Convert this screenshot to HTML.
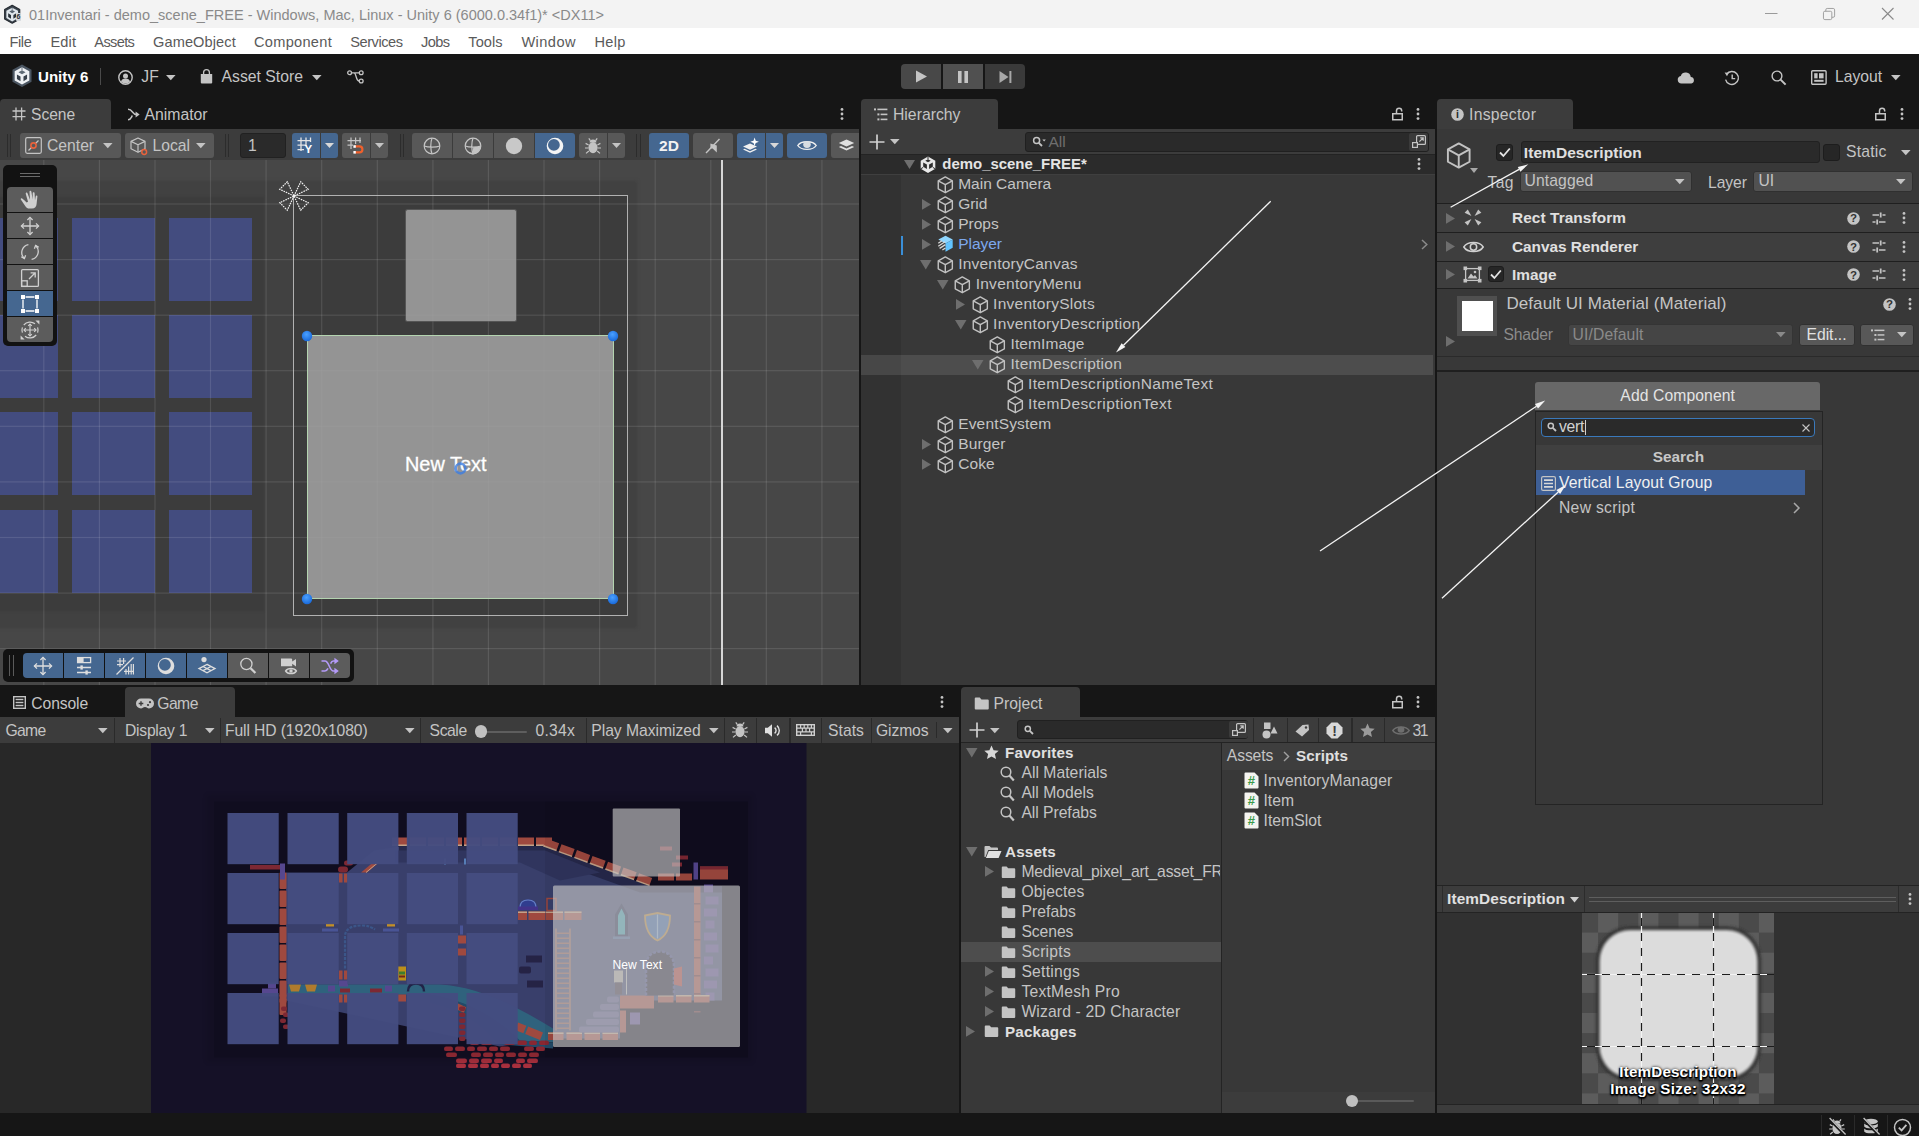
<!DOCTYPE html>
<html><head><meta charset="utf-8"><title>Unity</title>
<style>
html,body{margin:0;padding:0;}
body{width:1919px;height:1136px;overflow:hidden;background:#161616;font-family:"Liberation Sans", sans-serif;position:relative;}
.r{position:absolute;box-sizing:border-box;}
.t{position:absolute;white-space:nowrap;}
svg{position:absolute;overflow:visible;}
.btn{position:absolute;box-sizing:border-box;background:#585858;}
</style></head><body>
<div class="r" style="left:0px;top:0px;width:1919px;height:28px;background:#f3f3f3;"></div>
<div class="r" style="left:0px;top:28px;width:1919px;height:26px;background:#ffffff;"></div>
<svg style="left:3.8px;top:4.8px;" width="16.4" height="18.6" viewBox="0 0 20 23.6"><path d="M10 0.4L19.6 5.8V17.8L10 23.2L0.4 17.8V5.8Z" fill="#3a434c" stroke="#252b31" stroke-width="1.4" stroke-linejoin="round"/><path d="M10 3.4L17.4 7.4V16.6L10 20.8L2.6 16.6V7.4Z" fill="#dfe6ec"/><path d="M10 6.2L13.6 8.3L10 10.4L6.4 8.3Z" fill="#56626e"/><path d="M4.9 10.6L8.5 12.7V17.3L4.9 15.2Z" fill="#2a323a"/><path d="M15.1 10.6L11.5 12.7V17.3L15.1 15.2Z" fill="#2a323a"/><path d="M10 3.4V6.2" stroke="#56626e" stroke-width="0.9"/></svg>
<div class="r" style="left:16.3px;top:13.3px;width:4.4px;height:7.4px;background:#d4d8dc;border-radius:1px;"></div>
<div class="t" style="left:16.3px;top:13.00px;height:8px;line-height:8px;font-size:7px;color:#30363c;font-weight:bold;width:4.4px;text-align:center;">6</div>
<div class="t" style="left:29px;top:0.50px;height:28px;line-height:28px;font-size:14.5px;color:#8a8a8a;letter-spacing:0.007px;">01Inventari - demo_scene_FREE - Windows, Mac, Linux - Unity 6 (6000.0.34f1)* &lt;DX11&gt;</div>
<svg style="left:1763px;top:7.8px;" width="20" height="12" viewBox="0 0 20 12"><path d="M2 5.5H14.500" stroke="#9a9a9a" stroke-width="1"/></svg>
<svg style="left:1822.5px;top:7.8px;" width="13" height="13" viewBox="0 0 14 14"><g fill="none" stroke="#9a9a9a" stroke-width="1"><rect x="0.5" y="3.5" width="9" height="9" rx="1.5"/><path d="M3 3.5V2a1.5 1.5 0 0 1 1.5 -1.5H11a1.5 1.5 0 0 1 1.5 1.5V8.5a1.5 1.5 0 0 1 -1.5 1.5H9.5"/></g></svg>
<svg style="left:1881.2px;top:7.3px;" width="14" height="14" viewBox="0 0 14 14"><path d="M1 1L12.5 12.5M12.5 1L1 12.5" stroke="#8a8a8a" stroke-width="1.1" fill="none"/></svg>
<div class="t" style="left:9.5px;top:28.50px;height:26px;line-height:26px;font-size:14.6px;color:#5a5a5a;letter-spacing:-0.408px;">File</div>
<div class="t" style="left:50.5px;top:28.50px;height:26px;line-height:26px;font-size:14.6px;color:#5a5a5a;letter-spacing:0.126px;">Edit</div>
<div class="t" style="left:94.3px;top:28.50px;height:26px;line-height:26px;font-size:14.6px;color:#5a5a5a;letter-spacing:-0.639px;">Assets</div>
<div class="t" style="left:153px;top:28.50px;height:26px;line-height:26px;font-size:14.6px;color:#5a5a5a;letter-spacing:0.089px;">GameObject</div>
<div class="t" style="left:254px;top:28.50px;height:26px;line-height:26px;font-size:14.6px;color:#5a5a5a;letter-spacing:0.284px;">Component</div>
<div class="t" style="left:350.3px;top:28.50px;height:26px;line-height:26px;font-size:14.6px;color:#5a5a5a;letter-spacing:-0.465px;">Services</div>
<div class="t" style="left:421px;top:28.50px;height:26px;line-height:26px;font-size:14.6px;color:#5a5a5a;letter-spacing:-0.611px;">Jobs</div>
<div class="t" style="left:468.3px;top:28.50px;height:26px;line-height:26px;font-size:14.6px;color:#5a5a5a;letter-spacing:0.048px;">Tools</div>
<div class="t" style="left:521.4px;top:28.50px;height:26px;line-height:26px;font-size:14.6px;color:#5a5a5a;letter-spacing:0.449px;">Window</div>
<div class="t" style="left:594.5px;top:28.50px;height:26px;line-height:26px;font-size:14.6px;color:#5a5a5a;letter-spacing:0.278px;">Help</div>
<div class="r" style="left:0px;top:54px;width:1919px;height:45px;background:#161616;"></div>
<svg style="left:12px;top:64.4px;" width="20" height="23.4" viewBox="0 0 20 23.6"><path d="M10 0.4L19.6 5.8V17.8L10 23.2L0.4 17.8V5.8Z" fill="#4b5662"/><path d="M10 3.4L17.4 7.4V16.6L10 20.8L2.6 16.6V7.4Z" fill="#eef1f4"/><path d="M10 6.2L13.6 8.3L10 10.4L6.4 8.3Z" fill="#5f6b76"/><path d="M4.9 10.6L8.5 12.7V17.3L4.9 15.2Z" fill="#38414b"/><path d="M15.1 10.6L11.5 12.7V17.3L15.1 15.2Z" fill="#38414b"/><path d="M10 3.4V6.2" stroke="#5f6b76" stroke-width="0.9"/></svg>
<div class="t" style="left:38px;top:65.00px;height:24px;line-height:24px;font-size:15.1px;color:#ffffff;font-weight:bold;">Unity 6</div>
<div class="r" style="left:99.5px;top:68px;width:1px;height:17px;background:#4a4a4a;"></div>
<svg style="left:118.4px;top:69.5px;" width="15" height="15" viewBox="0 0 15 15"><circle cx="7.5" cy="7.5" r="6.7" fill="none" stroke="#c4c4c4" stroke-width="1.4"/><circle cx="7.5" cy="6" r="2.5" fill="#c4c4c4"/><path d="M3 11.8a4.6 4.2 0 0 1 9 0a6.5 6.5 0 0 1 -9 0Z" fill="#c4c4c4"/></svg>
<div class="t" style="left:141.3px;top:65.00px;height:24px;line-height:24px;font-size:15.7px;color:#c4c4c4;">JF</div>
<svg style="left:165.6px;top:74.5px;" width="9.6" height="5.2" viewBox="0 0 9.6 5.2"><path d="M0 0H9.6L4.8 5.2Z" fill="#c4c4c4"/></svg>
<svg style="left:199.8px;top:69px;" width="13" height="15" viewBox="0 0 13 15"><path d="M0.8 5h11.4v8.4a1 1 0 0 1 -1 1H1.8a1 1 0 0 1 -1 -1Z" fill="#c4c4c4"/><path d="M3.6 6V3.6a2.9 2.9 0 0 1 5.8 0V6" fill="none" stroke="#c4c4c4" stroke-width="1.3"/></svg>
<div class="t" style="left:221.6px;top:65.00px;height:24px;line-height:24px;font-size:15.75px;color:#c4c4c4;">Asset Store</div>
<svg style="left:311.9px;top:74.5px;" width="9.6" height="5.2" viewBox="0 0 9.6 5.2"><path d="M0 0H9.6L4.8 5.2Z" fill="#c4c4c4"/></svg>
<svg style="left:346.5px;top:69.5px;" width="17" height="14" viewBox="0 0 17 14"><g fill="none" stroke="#c4c4c4" stroke-width="1.3"><circle cx="2.6" cy="2.8" r="1.9"/><circle cx="14.2" cy="2.8" r="1.9"/><circle cx="14.2" cy="11" r="1.9"/><path d="M4.5 2.8H12.3M7 2.8C9.5 2.8 8.5 11 12.3 11"/></g></svg>
<div class="r" style="left:901px;top:64px;width:40px;height:25px;background:#484848;border-radius:4px 0 0 4px;"></div>
<div class="r" style="left:943px;top:64px;width:40px;height:25px;background:#505050;"></div>
<div class="r" style="left:985px;top:64px;width:40px;height:25px;background:#3a3a3a;border-radius:0 4px 4px 0;"></div>
<svg style="left:915px;top:70px;" width="13" height="13" viewBox="0 0 13 13"><path d="M1 0.5L12 6.5L1 12.5Z" fill="#c4c4c4"/></svg>
<svg style="left:957px;top:70.5px;" width="12" height="12" viewBox="0 0 12 12"><rect x="1" y="0" width="3.6" height="12" fill="#c4c4c4"/><rect x="7.4" y="0" width="3.6" height="12" fill="#c4c4c4"/></svg>
<svg style="left:998.5px;top:70.5px;" width="13" height="12" viewBox="0 0 13 12"><path d="M0.5 0L9.5 6L0.5 12Z" fill="#a8a8a8"/><rect x="10.4" y="0" width="2" height="12" fill="#a8a8a8"/></svg>
<svg style="left:1677px;top:70.5px;" width="19" height="13" viewBox="0 0 19 13"><path d="M4.4 12.6a3.9 3.9 0 0 1 -0.6 -7.7a5.2 5.2 0 0 1 10 1.2a3.3 3.3 0 0 1 0.6 6.5Z" fill="#c4c4c4"/></svg>
<svg style="left:1724px;top:69.5px;" width="16" height="16" viewBox="0 0 16 16"><g fill="none" stroke="#c4c4c4" stroke-width="1.4"><path d="M2.6 4.2A6.5 6.5 0 1 1 1.6 9.6"/><path d="M8.2 4.6V8.6H11.2"/></g><path d="M0.6 2.4L4.8 2.8L3 6.2Z" fill="#c4c4c4"/></svg>
<svg style="left:1770.5px;top:69.5px;" width="16" height="16" viewBox="0 0 16 16"><circle cx="6" cy="6" r="4.9" fill="none" stroke="#c4c4c4" stroke-width="1.4"/><path d="M9.6 9.6L14.6 14.6" stroke="#c4c4c4" stroke-width="2"/></svg>
<svg style="left:1811px;top:69.5px;" width="16" height="15" viewBox="0 0 16 15"><rect x="0.7" y="0.7" width="14.4" height="13.6" rx="1" fill="none" stroke="#c4c4c4" stroke-width="1.4"/><rect x="3.2" y="3.2" width="3.4" height="5.2" fill="#c4c4c4"/><rect x="8" y="3.2" width="4.6" height="5.2" fill="#c4c4c4"/><rect x="3.2" y="9.8" width="9.4" height="2" fill="#c4c4c4"/></svg>
<div class="t" style="left:1835px;top:65.00px;height:24px;line-height:24px;font-size:15.7px;color:#c4c4c4;">Layout</div>
<svg style="left:1891px;top:74.5px;" width="9.6" height="5.2" viewBox="0 0 9.6 5.2"><path d="M0 0H9.6L4.8 5.2Z" fill="#c4c4c4"/></svg>
<div class="r" style="left:0px;top:99px;width:111px;height:31px;background:#3c3c3c;border-radius:4px 4px 0 0;"></div>
<svg style="left:12px;top:107px;" width="14" height="14" viewBox="0 0 14 14"><path d="M4 0.5V13.5M9.6 0.5V13.5M0.5 4H13.5M0.5 9.6H13.5" stroke="#c4c4c4" stroke-width="1.3" fill="none"/></svg>
<div class="t" style="left:31px;top:103.40px;height:24px;line-height:24px;font-size:15.6px;color:#c4c4c4;">Scene</div>
<svg style="left:126.5px;top:107.5px;" width="13" height="13" viewBox="0 0 13 13"><path d="M1 1.2C6 1.2 5 6.5 9.5 6.5M1 11.8C4 11.8 4.2 9 5.4 7.6" stroke="#c4c4c4" stroke-width="1.5" fill="none"/><path d="M8.6 3.6L12.6 6.5L8.6 9.4Z" fill="#c4c4c4"/></svg>
<div class="t" style="left:144.4px;top:103.40px;height:24px;line-height:24px;font-size:15.8px;color:#c4c4c4;">Animator</div>
<svg style="left:839px;top:106px;" width="6" height="16" viewBox="0 0 6 16"><circle cx="3" cy="3.4000000000000004" r="1.4" fill="#c4c4c4"/><circle cx="3" cy="8.0" r="1.4" fill="#c4c4c4"/><circle cx="3" cy="12.6" r="1.4" fill="#c4c4c4"/></svg>
<div class="r" style="left:0px;top:129px;width:859px;height:31px;background:#3c3c3c;"></div>
<div class="r" style="left:7px;top:134px;width:1px;height:23px;background:#2c2c2c;"></div>
<div class="r" style="left:10px;top:134px;width:1px;height:23px;background:#2c2c2c;"></div>
<div class="r" style="left:20px;top:133px;width:101px;height:25px;background:#585858;border-radius:3px;"></div>
<div class="r" style="left:125px;top:133px;width:89px;height:25px;background:#585858;border-radius:3px;"></div>
<svg style="left:25px;top:137px;" width="17" height="17" viewBox="0 0 17 17"><rect x="0.7" y="0.7" width="15.6" height="15.6" rx="1.5" fill="none" stroke="#c4c4c4" stroke-width="1.2"/><path d="M3.5 13.5L13.5 3.5" stroke="#c4c4c4" stroke-width="1.2"/><circle cx="8.5" cy="8.5" r="2.6" fill="#585858" stroke="#e8623c" stroke-width="1.6"/></svg>
<div class="t" style="left:47px;top:133.50px;height:24px;line-height:24px;font-size:15.7px;color:#c4c4c4;">Center</div>
<svg style="left:103px;top:143px;" width="9.6" height="5.2" viewBox="0 0 9.6 5.2"><path d="M0 0H9.6L4.8 5.2Z" fill="#c4c4c4"/></svg>
<svg style="left:130px;top:137px;" width="20" height="20" viewBox="0 0 20 20"><g fill="none" stroke="#c4c4c4" stroke-width="1.2" stroke-linejoin="round"><path d="M8 1L15 4.4V11.8L8 15.2L1 11.8V4.4Z"/><path d="M1 4.4L8 7.8L15 4.4M8 7.8V15.2"/></g><circle cx="14.2" cy="15" r="2.4" fill="#585858" stroke="#e8623c" stroke-width="1.5"/></svg>
<div class="t" style="left:152.5px;top:133.50px;height:24px;line-height:24px;font-size:15.7px;color:#c4c4c4;">Local</div>
<svg style="left:196px;top:143px;" width="9.6" height="5.2" viewBox="0 0 9.6 5.2"><path d="M0 0H9.6L4.8 5.2Z" fill="#c4c4c4"/></svg>
<div class="r" style="left:225px;top:134px;width:1px;height:23px;background:#2c2c2c;"></div>
<div class="r" style="left:228px;top:134px;width:1px;height:23px;background:#2c2c2c;"></div>
<div class="r" style="left:240px;top:133px;width:46px;height:25px;background:#2a2a2a;border-radius:3px;border:1px solid #212121;"></div>
<div class="t" style="left:248px;top:133.50px;height:24px;line-height:24px;font-size:15.7px;color:#c4c4c4;">1</div>
<div class="r" style="left:292px;top:133px;width:28px;height:25px;background:#456790;border-radius:3px 0 0 3px;"></div>
<div class="r" style="left:321px;top:133px;width:17px;height:25px;background:#456790;border-radius:0 3px 3px 0;"></div>
<svg style="left:297px;top:137px;" width="18" height="17" viewBox="0 0 18 17"><path d="M4 0.5V14M9 0.5V9M0.5 3.6H14M0.5 8.2H9M0.5 12.6H7" stroke="#e4e4e4" stroke-width="1.3" fill="none"/><path d="M13.5 0.5V5" stroke="#e4e4e4" stroke-width="1.3"/><text x="7.600" y="16.200" font-size="11.500" font-weight="bold" fill="#ffffff" font-family="Liberation Sans, sans-serif">Y</text></svg>
<svg style="left:325px;top:143px;" width="9" height="5" viewBox="0 0 9 5"><path d="M0 0H9L4.5 5Z" fill="#d8d8d8"/></svg>
<div class="r" style="left:342px;top:133px;width:28px;height:25px;background:#585858;border-radius:3px 0 0 3px;"></div>
<div class="r" style="left:371px;top:133px;width:17px;height:25px;background:#585858;border-radius:0 3px 3px 0;"></div>
<svg style="left:347px;top:137px;" width="18" height="17" viewBox="0 0 18 17"><path d="M4 0.5V12M8.6 0.5V7M13 0.5V6M0.5 3.6H14M0.5 8.2H6" stroke="#c4c4c4" stroke-width="1.2" fill="none"/><path d="M8 9.4H12.4a3 3 0 0 1 0 6H8" stroke="#f0602c" stroke-width="2.2" fill="none"/><rect x="6.4" y="8.2" width="2.4" height="2.6" fill="#fff"/><rect x="6.4" y="14" width="2.4" height="2.6" fill="#fff"/></svg>
<svg style="left:375px;top:143px;" width="9" height="5" viewBox="0 0 9 5"><path d="M0 0H9L4.5 5Z" fill="#c4c4c4"/></svg>
<div class="r" style="left:399.5px;top:134px;width:1px;height:23px;background:#2c2c2c;"></div>
<div class="r" style="left:402.5px;top:134px;width:1px;height:23px;background:#2c2c2c;"></div>
<div class="r" style="left:412px;top:133px;width:40px;height:25px;background:#585858;border-radius:3px 0 0 3px;"></div>
<div class="r" style="left:453px;top:133px;width:40px;height:25px;background:#585858;border-radius:0;"></div>
<div class="r" style="left:494px;top:133px;width:40px;height:25px;background:#585858;border-radius:0;"></div>
<div class="r" style="left:535px;top:133px;width:40px;height:25px;background:#456790;border-radius:0 3px 3px 0;"></div>
<svg style="left:423px;top:137px;" width="18" height="18" viewBox="0 0 18 18"><g fill="none" stroke="#c4c4c4" stroke-width="1.2"><circle cx="9" cy="9" r="7.8"/><path d="M9 1.2C7.4 5 7.4 13 9 16.8M1.2 9C5 10.6 13 10.6 16.8 9"/></g></svg>
<svg style="left:464px;top:137px;" width="18" height="18" viewBox="0 0 18 18"><g fill="none" stroke="#c4c4c4" stroke-width="1.2"><circle cx="9" cy="9" r="7.8"/><path d="M9 1.2C7.4 5 7.4 13 9 16.8M1.2 9C5 10.6 13 10.6 16.8 9"/></g><path d="M9.300 10.200C12 10.200 15 9.800 16.700 9.300A7.800 7.800 0 0 1 9.300 16.800C8.800 14.500 8.800 12.500 9.300 10.200Z" fill="#c4c4c4"/><path d="M2.600 13.200A8.400 8.400 0 0 0 16.700 10.500A8.200 8.200 0 0 1 9 17.400A8.200 8.200 0 0 1 2.600 13.200Z" fill="#c4c4c4"/></svg>
<svg style="left:505px;top:137px;" width="18" height="18" viewBox="0 0 18 18"><circle cx="9" cy="9" r="8.2" fill="#c8c8c8"/></svg>
<svg style="left:546px;top:137px;" width="18" height="18" viewBox="0 0 18 18"><path fill-rule="evenodd" d="M9 0.700A8.300 8.300 0 1 0 9 17.300A8.300 8.300 0 1 0 9 0.700ZM7.900 2A5.900 5.900 0 1 1 7.900 13.800A5.900 5.900 0 1 1 7.900 2Z" fill="#f4f4f4"/></svg>
<div class="r" style="left:579px;top:133px;width:28px;height:25px;background:#585858;border-radius:3px 0 0 3px;"></div>
<div class="r" style="left:608px;top:133px;width:17px;height:25px;background:#585858;border-radius:0 3px 3px 0;"></div>
<svg style="left:584px;top:136.5px;" width="18" height="18" viewBox="0 0 18 18"><g fill="#c4c4c4"><ellipse cx="9" cy="10.6" rx="4.6" ry="5.6"/><path d="M5.6 5.6a3.4 3 0 0 1 6.8 0Z"/></g><g stroke="#c4c4c4" stroke-width="1.2" fill="none"><path d="M6.4 3.6L4.8 1.4M11.6 3.6L13.2 1.4M4.6 8L1.6 6.4M13.4 8L16.4 6.4M4.4 11H1M13.6 11H17M4.8 14L2 16.4M13.2 14L16 16.4"/></g></svg>
<svg style="left:612px;top:143px;" width="9" height="5" viewBox="0 0 9 5"><path d="M0 0H9L4.5 5Z" fill="#c4c4c4"/></svg>
<div class="r" style="left:636px;top:134px;width:1px;height:23px;background:#2c2c2c;"></div>
<div class="r" style="left:639.5px;top:134px;width:1px;height:23px;background:#2c2c2c;"></div>
<div class="r" style="left:649px;top:133px;width:40px;height:25px;background:#456790;border-radius:3px;"></div>
<div class="t" style="left:649px;top:133.50px;height:24px;line-height:24px;font-size:15.5px;color:#f2f2f2;font-weight:bold;width:40px;text-align:center;">2D</div>
<div class="r" style="left:693px;top:133px;width:40px;height:25px;background:#585858;border-radius:3px;"></div>
<svg style="left:704px;top:137px;" width="18" height="18" viewBox="0 0 18 18"><path d="M2 16L15.5 2" stroke="#c4c4c4" stroke-width="1.4"/><path d="M6.4 6.4V11.6L8.6 11.6L12.8 15.4V8.4Z" fill="#c4c4c4"/></svg>
<div class="r" style="left:737px;top:133px;width:28px;height:25px;background:#456790;border-radius:3px 0 0 3px;"></div>
<div class="r" style="left:766px;top:133px;width:17px;height:25px;background:#456790;border-radius:0 3px 3px 0;"></div>
<svg style="left:742px;top:137px;" width="19" height="18" viewBox="0 0 19 18"><path d="M1 9.6L8 6.4L15 9.6L8 12.8Z" fill="#f0f0f0"/><path d="M1 12.6L8 15.8L15 12.6L13.4 11.8L8 14.2L2.6 11.8Z" fill="#f0f0f0"/><path d="M12.6 0.5L13.7 3.7L16.9 4.8L13.7 5.9L12.6 9.1L11.5 5.9L8.3 4.8L11.5 3.7Z" fill="#fff"/></svg>
<svg style="left:770px;top:143px;" width="9" height="5" viewBox="0 0 9 5"><path d="M0 0H9L4.5 5Z" fill="#d8d8d8"/></svg>
<div class="r" style="left:787px;top:133px;width:40px;height:25px;background:#456790;border-radius:3px;"></div>
<svg style="left:797px;top:139px;" width="20" height="13" viewBox="0 0 20 13"><path d="M0.8 6.5C4 1.4 16 1.4 19.2 6.5C16 11.6 4 11.6 0.8 6.5Z" fill="none" stroke="#f0f0f0" stroke-width="1.4"/><ellipse cx="10" cy="5.6" rx="3.8" ry="3.4" fill="#d8dde2"/></svg>
<div class="r" style="left:831px;top:133px;width:28px;height:25px;background:#585858;border-radius:3px 0 0 3px;"></div>
<svg style="left:838px;top:138px;" width="17" height="15" viewBox="0 0 17 15"><path d="M0.8 5L8.5 1.4L16.2 5L8.5 8.6Z" fill="#e0e0e0"/><path d="M0.8 9L8.5 12.6L16.2 9L14 8L8.5 10.6L3 8Z" fill="#e0e0e0"/></svg>
<div class="r" style="left:0;top:160px;width:859px;height:525px;background:#474747;overflow:hidden;"><div class="r" style="left:-60px;top:23px;width:695px;height:443px;background:#414141;box-shadow:0 0 3px 2px #414141;"></div><div class="r" style="left:-60px;top:38px;width:323px;height:412px;background:#3c3c3c;box-shadow:0 0 2px 1px #3c3c3c;"></div><div class="r" style="left:293.5px;top:35.5px;width:334px;height:419.5px;background:#3c3c3c;"></div><div class="r" style="left:-25px;top:58px;width:83px;height:83px;background:#434c7f;"></div><div class="r" style="left:-25px;top:155px;width:83px;height:83px;background:#434c7f;"></div><div class="r" style="left:-25px;top:252.3px;width:83px;height:83px;background:#434c7f;"></div><div class="r" style="left:-25px;top:349.5px;width:83px;height:83px;background:#434c7f;"></div><div class="r" style="left:72px;top:58px;width:83px;height:83px;background:#434c7f;"></div><div class="r" style="left:72px;top:155px;width:83px;height:83px;background:#434c7f;"></div><div class="r" style="left:72px;top:252.3px;width:83px;height:83px;background:#434c7f;"></div><div class="r" style="left:72px;top:349.5px;width:83px;height:83px;background:#434c7f;"></div><div class="r" style="left:169px;top:58px;width:83px;height:83px;background:#434c7f;"></div><div class="r" style="left:169px;top:155px;width:83px;height:83px;background:#434c7f;"></div><div class="r" style="left:169px;top:252.3px;width:83px;height:83px;background:#434c7f;"></div><div class="r" style="left:169px;top:349.5px;width:83px;height:83px;background:#434c7f;"></div><svg style="left:0;top:0" width="859" height="525"><g fill="rgba(255,255,255,0.11)"><rect x="43.2" y="0" width="1.2" height="525" /><rect x="98.8" y="0" width="1.2" height="525" /><rect x="154.4" y="0" width="1.2" height="525" /><rect x="209.9" y="0" width="1.2" height="525" /><rect x="265.5" y="0" width="1.2" height="525" /><rect x="321.1" y="0" width="1.2" height="525" /><rect x="376.7" y="0" width="1.2" height="525" /><rect x="432.3" y="0" width="1.2" height="525" /><rect x="487.8" y="0" width="1.2" height="525" /><rect x="543.4" y="0" width="1.2" height="525" /><rect x="599.0" y="0" width="1.2" height="525" /><rect x="654.6" y="0" width="1.2" height="525" /><rect x="710.2" y="0" width="1.2" height="525" /><rect x="765.7" y="0" width="1.2" height="525" /><rect x="821.3" y="0" width="1.2" height="525" /><rect x="876.9" y="0" width="1.2" height="525" /><rect x="0" y="-12.2" width="859" height="1.2" /><rect x="0" y="43.4" width="859" height="1.2" /><rect x="0" y="99.0" width="859" height="1.2" /><rect x="0" y="154.6" width="859" height="1.2" /><rect x="0" y="210.1" width="859" height="1.2" /><rect x="0" y="265.7" width="859" height="1.2" /><rect x="0" y="321.3" width="859" height="1.2" /><rect x="0" y="376.9" width="859" height="1.2" /><rect x="0" y="432.5" width="859" height="1.2" /><rect x="0" y="488.0" width="859" height="1.2" /></g></svg><div class="r" style="left:405.7px;top:50px;width:110.6px;height:111px;background:rgba(163,163,163,0.85);box-shadow:0 0 0 1px rgba(110,110,110,0.5);border-radius:1.5px;"></div><div class="r" style="left:307px;top:175.5px;width:306px;height:263px;background:rgba(163,163,163,0.85);"></div><div class="r" style="left:293px;top:35px;width:335px;height:420.5px;background:transparent;border:1px solid rgba(205,205,205,0.8);"></div><div class="r" style="left:306.5px;top:175px;width:307px;height:264px;background:transparent;border:1px solid #b4d4b0;"></div><div class="r" style="left:721px;top:0px;width:2px;height:525px;background:#d6d6d6;"></div><div class="t" style="left:405px;top:290px;height:28px;line-height:28px;font-size:19.9px;color:#fff;-webkit-text-stroke:0.300px #fff;">New Text</div><svg style="left:453.5px;top:302px;" width="13" height="13" viewBox="0 0 13 13"><circle cx="6.5" cy="6.5" r="4.800" fill="none" stroke="rgba(60,125,225,0.800)" stroke-width="2.700"/></svg><svg style="left:273.5px;top:15.5px;" width="40" height="40" viewBox="0 0 40 40"><g transform="translate(20 20)"><path d="M0 0L-5.300 -14.800L5.300 -14.800Z" transform="rotate(45)" fill="none" stroke="#f2f2f2" stroke-width="1.2" stroke-dasharray="1.6 0.9"/><path d="M0 0L-5.300 -14.800L5.300 -14.800Z" transform="rotate(135)" fill="none" stroke="#f2f2f2" stroke-width="1.2" stroke-dasharray="1.6 0.9"/><path d="M0 0L-5.300 -14.800L5.300 -14.800Z" transform="rotate(225)" fill="none" stroke="#f2f2f2" stroke-width="1.2" stroke-dasharray="1.6 0.9"/><path d="M0 0L-5.300 -14.800L5.300 -14.800Z" transform="rotate(315)" fill="none" stroke="#f2f2f2" stroke-width="1.2" stroke-dasharray="1.6 0.9"/></g></svg><svg style="left:301px;top:169.5px;" width="12" height="12" viewBox="0 0 12 12"><defs><radialGradient id="hg" cx="0.45" cy="0.35" r="0.7"><stop offset="0" stop-color="#4aa0ff"/><stop offset="1" stop-color="#1565d8"/></radialGradient></defs><circle cx="6" cy="6" r="5.2" fill="url(#hg)"/></svg><svg style="left:607px;top:169.5px;" width="12" height="12" viewBox="0 0 12 12"><defs><radialGradient id="hg" cx="0.45" cy="0.35" r="0.7"><stop offset="0" stop-color="#4aa0ff"/><stop offset="1" stop-color="#1565d8"/></radialGradient></defs><circle cx="6" cy="6" r="5.2" fill="url(#hg)"/></svg><svg style="left:301px;top:432.79999999999995px;" width="12" height="12" viewBox="0 0 12 12"><defs><radialGradient id="hg" cx="0.45" cy="0.35" r="0.7"><stop offset="0" stop-color="#4aa0ff"/><stop offset="1" stop-color="#1565d8"/></radialGradient></defs><circle cx="6" cy="6" r="5.2" fill="url(#hg)"/></svg><svg style="left:607px;top:432.79999999999995px;" width="12" height="12" viewBox="0 0 12 12"><defs><radialGradient id="hg" cx="0.45" cy="0.35" r="0.7"><stop offset="0" stop-color="#4aa0ff"/><stop offset="1" stop-color="#1565d8"/></radialGradient></defs><circle cx="6" cy="6" r="5.2" fill="url(#hg)"/></svg><div class="r" style="left:3px;top:5px;width:54px;height:181px;background:#121212;border-radius:5px;"></div><div class="r" style="left:20px;top:12.5px;width:20px;height:1.2px;background:#6a6a6a;"></div><div class="r" style="left:20px;top:16.30000000000001px;width:20px;height:1.2px;background:#6a6a6a;"></div><div class="r" style="left:7px;top:27px;width:46px;height:25px;background:#5c5c5c;border-radius:4px 4px 0 0;"></div><div class="r" style="left:7px;top:53px;width:46px;height:25px;background:#5c5c5c;border-radius:0;"></div><div class="r" style="left:7px;top:79px;width:46px;height:25px;background:#5c5c5c;border-radius:0;"></div><div class="r" style="left:7px;top:105px;width:46px;height:25px;background:#5c5c5c;border-radius:0;"></div><div class="r" style="left:7px;top:131px;width:46px;height:25px;background:#456790;border-radius:0;"></div><div class="r" style="left:7px;top:157px;width:46px;height:25px;background:#5c5c5c;border-radius:0 0 4px 4px;"></div><svg style="left:20px;top:30px;" width="20" height="20" viewBox="0 0 20 20"><path d="M4.6 10.6L2.2 8.4C1.2 7.6 0.2 8.8 1 9.8L5.4 16.2C6.4 17.8 7.6 18.6 9.6 18.6H12C15 18.6 16.4 16.6 16.6 14L17.4 6.6C17.5 5.2 15.9 5 15.7 6.4L15 10.2L14.6 3.4C14.5 1.9 12.7 2 12.7 3.4L12.6 9.6L11.4 1.8C11.2 0.4 9.4 0.6 9.5 2L10 9.8L7.6 3.4C7.1 2 5.4 2.6 5.8 4L8 11.8L6.6 12.4Z" fill="#d0d0d0"/></svg><svg style="left:20px;top:56px;" width="20" height="20" viewBox="0 0 20 20"><g stroke="#d0d0d0" stroke-width="1.3" fill="none"><path d="M10 1.5V18.5M1.5 10H18.5"/><path d="M7.4 4L10 1.4L12.6 4M7.4 16L10 18.6L12.6 16M4 7.4L1.4 10L4 12.6M16 7.4L18.6 10L16 12.6"/></g></svg><svg style="left:20px;top:82px;" width="20" height="20" viewBox="0 0 20 20"><g stroke="#d0d0d0" stroke-width="1.3" fill="none"><path d="M8.4 2.6A8 8 0 0 0 4.2 16.2M11.6 17.4A8 8 0 0 0 15.8 3.8"/><path d="M1.2 14.8L4.4 16.6L5.6 13.2M18.8 5.2L15.6 3.4L14.4 6.8"/></g></svg><svg style="left:20px;top:108px;" width="20" height="20" viewBox="0 0 20 20"><g stroke="#d0d0d0" stroke-width="1.3" fill="none"><rect x="1.6" y="1.6" width="16.8" height="16.8" rx="1"/><rect x="1.6" y="12.8" width="5.6" height="5.6"/><path d="M9 11L15 5M10.6 4.8H15.2V9.4"/></g></svg><svg style="left:20px;top:134px;" width="20" height="20" viewBox="0 0 20 20"><g stroke="#fff" stroke-width="1.3" fill="none"><path d="M5.6 3H14.4M5.6 17H14.4M3 5.6V14.4M17 5.6V14.4"/></g><g fill="#fff"><rect x="1" y="1" width="4" height="4"/><rect x="15" y="1" width="4" height="4"/><rect x="1" y="15" width="4" height="4"/><rect x="15" y="15" width="4" height="4"/></g></svg><svg style="left:20px;top:160px;" width="20" height="20" viewBox="0 0 20 20"><g stroke="#d0d0d0" stroke-width="1.2" fill="none"><path d="M10 4V16M4 10H16"/><path d="M8.2 5.8L10 4L11.8 5.8M8.2 14.2L10 16L11.8 14.2M5.8 8.2L4 10L5.8 11.8M14.2 8.2L16 10L14.2 11.8"/><path d="M3.8 5A8 8 0 0 1 15 3.8M16.2 15A8 8 0 0 1 5 16.2M17.6 7.4A8 8 0 0 1 17.6 12.6M2.4 12.6A8 8 0 0 1 2.4 7.4"/></g><path d="M15.4 0.6H19.4V4.6ZM0.6 15.4V19.4H4.6Z" fill="#d0d0d0"/></svg><div class="r" style="left:3px;top:489.29999999999995px;width:351px;height:32.4px;background:#121212;border-radius:5px;"></div><div class="r" style="left:9px;top:495px;width:1.2px;height:21px;background:#5a5a5a;"></div><div class="r" style="left:12.5px;top:495px;width:1.2px;height:21px;background:#5a5a5a;"></div><div class="r" style="left:23px;top:493px;width:40px;height:25px;background:#456790;border-radius:4px 0 0 4px;"></div><div class="r" style="left:64px;top:493px;width:40px;height:25px;background:#456790;border-radius:0;"></div><div class="r" style="left:105px;top:493px;width:40px;height:25px;background:#456790;border-radius:0;"></div><div class="r" style="left:146px;top:493px;width:40px;height:25px;background:#456790;border-radius:0;"></div><div class="r" style="left:187px;top:493px;width:40px;height:25px;background:#456790;border-radius:0;"></div><div class="r" style="left:228px;top:493px;width:40px;height:25px;background:#5c5c5c;border-radius:0;"></div><div class="r" style="left:269px;top:493px;width:40px;height:25px;background:#5c5c5c;border-radius:0;"></div><div class="r" style="left:310px;top:493px;width:40px;height:25px;background:#5c5c5c;border-radius:0 4px 4px 0;"></div><svg style="left:33.0px;top:495.5px;" width="20" height="20" viewBox="0 0 20 20"><g stroke="#dedede" stroke-width="1.3" fill="none"><path d="M10 1.5V18.5M1.5 10H18.5"/><path d="M7.4 4L10 1.4L12.6 4M7.4 16L10 18.6L12.6 16M4 7.4L1.4 10L4 12.6M16 7.4L18.6 10L16 12.6"/></g></svg><svg style="left:74.0px;top:495.5px;" width="20" height="20" viewBox="0 0 20 20"><g stroke="#dedede" stroke-width="1.3" fill="none"><rect x="3.6" y="1.6" width="13" height="5"/><path d="M3 11.5H17M3 16.5H17"/></g><rect x="3.6" y="1.6" width="6" height="5" fill="#dedede"/><rect x="6.4" y="9.4" width="2.4" height="4.2" fill="#dedede"/><rect x="11.4" y="14.4" width="2.4" height="4.2" fill="#dedede"/></svg><svg style="left:115.0px;top:495.5px;" width="20" height="20" viewBox="0 0 20 20"><g stroke="#dedede" stroke-width="1.2" fill="none"><path d="M5 2V11M8.6 2V8M2 5H11M2 8.6H8"/><path d="M1.5 18.5L18.5 1.5"/><path d="M11 13V18.5M13.6 10.4V18.5M16.2 8V18.5M18.4 8V18.5M9 15.4H18.5"/></g></svg><svg style="left:156.0px;top:495.5px;" width="20" height="20" viewBox="0 0 20 20"><path fill-rule="evenodd" d="M10 1.700A8.300 8.300 0 1 0 10 18.300A8.300 8.300 0 1 0 10 1.700ZM8.900 3A5.900 5.900 0 1 1 8.900 14.800A5.900 5.900 0 1 1 8.900 3Z" fill="#dedede"/></svg><svg style="left:197.0px;top:495.5px;" width="20" height="20" viewBox="0 0 20 20"><circle cx="7" cy="3.6" r="2.6" fill="#dedede"/><g stroke="#dedede" stroke-width="1.3" fill="none"><path d="M10 8.4L18 12.6L10 16.8L2 12.6Z"/><path d="M6 10.5L14 14.7M14 10.5L6 14.7"/></g></svg><svg style="left:238.0px;top:495.5px;" width="20" height="20" viewBox="0 0 20 20"><circle cx="8.4" cy="8" r="5.6" fill="none" stroke="#d0d0d0" stroke-width="1.3"/><path d="M12.6 12.2L17.4 17" stroke="#d0d0d0" stroke-width="2.2"/></svg><svg style="left:279.0px;top:495.5px;" width="20" height="20" viewBox="0 0 20 20"><path d="M2 2.4h10a1.2 1.2 0 0 1 1.200 1.200V5.600L17 3V10.400L13.200 7.800V10.2H2Z" fill="#d0d0d0"/><path d="M6.600 15C8.800 11.600 15.200 11.600 17.400 15C15.200 18.400 8.800 18.400 6.600 15Z" fill="none" stroke="#d0d0d0" stroke-width="1.400"/><circle cx="12" cy="15" r="1.700" fill="#d0d0d0"/></svg><svg style="left:320.0px;top:495.5px;" width="20" height="20" viewBox="0 0 20 20"><g stroke="#b49af8" stroke-width="1.6" fill="none"><path d="M1.5 5H5C9 5 9.4 15 13.400 15H15M1.5 15H5C6.600 15 7.400 13.600 8 12.400M10.600 7.600C11.200 6.200 12 5 13.400 5H15"/></g><path d="M14.400 1.800L18.800 5L14.400 8.200ZM14.400 11.800L18.800 15L14.400 18.200Z" fill="#b49af8"/></svg></div>
<div class="r" style="left:861px;top:99px;width:137px;height:31px;background:#3c3c3c;border-radius:4px 4px 0 0;"></div>
<svg style="left:874px;top:107.5px;" width="14" height="13" viewBox="0 0 14 13"><g fill="#c4c4c4"><rect x="0" y="0.4" width="2" height="2"/><rect x="3.4" y="0.6" width="10" height="1.6"/><rect x="3.4" y="5.4" width="2" height="2"/><rect x="6.6" y="5.6" width="6.8" height="1.6"/><rect x="3.4" y="10.400" width="2" height="2"/><rect x="6.6" y="10.600" width="6.8" height="1.6"/></g></svg>
<div class="t" style="left:893px;top:103.40px;height:24px;line-height:24px;font-size:15.75px;color:#c4c4c4;">Hierarchy</div>
<svg style="left:1391.5px;top:107px;" width="12" height="14" viewBox="0 0 12 14"><rect x="0.75" y="6.75" width="9.5" height="6" fill="none" stroke="#c4c4c4" stroke-width="1.5"/><path d="M4.5 6.5V3.8a2.6 2.6 0 0 1 5.2 0V4.6" fill="none" stroke="#c4c4c4" stroke-width="1.5"/></svg>
<svg style="left:1415px;top:106px;" width="6" height="16" viewBox="0 0 6 16"><circle cx="3" cy="3.4000000000000004" r="1.4" fill="#c4c4c4"/><circle cx="3" cy="8.0" r="1.4" fill="#c4c4c4"/><circle cx="3" cy="12.6" r="1.4" fill="#c4c4c4"/></svg>
<div class="r" style="left:861px;top:129px;width:574px;height:25px;background:#3c3c3c;"></div>
<svg style="left:869px;top:134px;" width="16" height="16" viewBox="0 0 16 16"><path d="M8 0.5V15.500M0.500 8H15.500" stroke="#d0d0d0" stroke-width="1.700"/></svg>
<svg style="left:890px;top:139px;" width="9.6" height="5.2" viewBox="0 0 9.6 5.2"><path d="M0 0H9.6L4.8 5.2Z" fill="#c4c4c4"/></svg>
<div class="r" style="left:1025px;top:131.5px;width:404px;height:20px;background:#2a2a2a;border-radius:3px;border:1px solid #202020;"></div>
<svg style="left:1032px;top:136px;" width="14" height="12" viewBox="0 0 14 12"><circle cx="4.600" cy="4.600" r="3" fill="none" stroke="#c4c4c4" stroke-width="1.500"/><path d="M6.800 6.800L10 10" stroke="#c4c4c4" stroke-width="1.800"/><path d="M10.400 3.400h3.400l-1.700 2Z" fill="#c4c4c4"/></svg>
<div class="t" style="left:1048.5px;top:132.00px;height:20px;line-height:20px;font-size:15.5px;color:#6e6e6e;">All</div>
<div class="r" style="left:1409px;top:132.5px;width:19px;height:18px;background:#3a3a3a;border-radius:2px;"></div>
<svg style="left:1411.5px;top:135px;" width="14" height="13" viewBox="0 0 14 13"><g fill="none" stroke="#c4c4c4" stroke-width="1.200"><rect x="4.600" y="0.600" width="8.800" height="8.800" rx="1"/><path d="M7.400 6.600L11 3M8.200 2.800H11.200V5.800"/><rect x="0.600" y="7.600" width="4.800" height="4.800" fill="#3a3a3a"/></g></svg>
<div class="r" style="left:861px;top:154px;width:574px;height:531px;background:#383838;"></div>
<div class="r" style="left:861px;top:154px;width:40px;height:531px;background:#323232;"></div>
<div class="r" style="left:861px;top:154px;width:574px;height:20px;background:#2b2b2b;"></div>
<div class="r" style="left:861px;top:154px;width:574px;height:1px;background:#232323;"></div>
<div class="r" style="left:861px;top:173.5px;width:574px;height:1px;background:#3f3f3f;"></div>
<div class="r" style="left:901px;top:354.5px;width:532px;height:20px;background:#4d4d4d;"></div>
<div class="r" style="left:861px;top:354.5px;width:40px;height:20px;background:#474747;"></div>
<svg style="left:903.5px;top:159.5px;" width="11" height="9" viewBox="0 0 11 9"><path d="M0 0H11L5.500 9Z" fill="#6e6e6e"/></svg>
<svg style="left:920px;top:155.5px;" width="16" height="17.5" viewBox="0 0 16 17.5"><path d="M8 0.600L15.300 4.700V12.800L8 16.900L0.700 12.800V4.700Z" fill="#e8e8e8"/><path d="M8 3.200L10.700 4.750L8 6.300L5.300 4.750Z" fill="#2d2d2d"/><path d="M3.200 6.400L6.900 8.500V12.900L3.200 10.800ZM12.800 6.400L9.100 8.500V12.900L12.800 10.800Z" fill="#2d2d2d"/><path d="M8 0.600V3.200M0.700 12.800L3.200 11.400M15.300 12.800L12.800 11.400" stroke="#2d2d2d" stroke-width="1"/></svg>
<div class="t" style="left:942.3px;top:154.30px;height:20px;line-height:20px;font-size:14.95px;color:#e4e4e4;font-weight:bold;">demo_scene_FREE*</div>
<svg style="left:1415.5px;top:156px;" width="6" height="16" viewBox="0 0 6 16"><circle cx="3" cy="3.4000000000000004" r="1.4" fill="#c4c4c4"/><circle cx="3" cy="8.0" r="1.4" fill="#c4c4c4"/><circle cx="3" cy="12.6" r="1.4" fill="#c4c4c4"/></svg>
<svg style="left:936.7px;top:176.1px;" width="16.6" height="17.637500000000003" viewBox="0 0 16 17"><g fill="none" stroke="#c2c2c2" stroke-width="1.35" stroke-linejoin="round"><path d="M8 0.9L14.8 4.6V12.4L8 16.1L1.2 12.4V4.6Z"/><path d="M1.2 4.6L8 8.4L14.8 4.6M8 8.4V16.1"/></g></svg>
<div class="t" style="left:958.2px;top:174.30px;height:20px;line-height:20px;font-size:15.5px;color:#c4c4c4;letter-spacing:-0.003px;">Main Camera</div>
<svg style="left:936.7px;top:196.1px;" width="16.6" height="17.637500000000003" viewBox="0 0 16 17"><g fill="none" stroke="#c2c2c2" stroke-width="1.35" stroke-linejoin="round"><path d="M8 0.9L14.8 4.6V12.4L8 16.1L1.2 12.4V4.6Z"/><path d="M1.2 4.6L8 8.4L14.8 4.6M8 8.4V16.1"/></g></svg>
<div class="t" style="left:958.2px;top:194.30px;height:20px;line-height:20px;font-size:15.5px;color:#c4c4c4;letter-spacing:-0.052px;">Grid</div>
<svg style="left:921.5px;top:198.8px;" width="9" height="10.8" viewBox="0 0 9 10.8"><path d="M0 0V10.8L9 5.4Z" fill="#6e6e6e"/></svg>
<svg style="left:936.7px;top:216.1px;" width="16.6" height="17.637500000000003" viewBox="0 0 16 17"><g fill="none" stroke="#c2c2c2" stroke-width="1.35" stroke-linejoin="round"><path d="M8 0.9L14.8 4.6V12.4L8 16.1L1.2 12.4V4.6Z"/><path d="M1.2 4.6L8 8.4L14.8 4.6M8 8.4V16.1"/></g></svg>
<div class="t" style="left:958.2px;top:214.30px;height:20px;line-height:20px;font-size:15.5px;color:#c4c4c4;letter-spacing:0.002px;">Props</div>
<svg style="left:921.5px;top:218.8px;" width="9" height="10.8" viewBox="0 0 9 10.8"><path d="M0 0V10.8L9 5.4Z" fill="#6e6e6e"/></svg>
<svg style="left:936.5px;top:235px;" width="17" height="18" viewBox="0 0 17 18"><path d="M8.500 0.800L15.700 4.600V12.700L8.500 16.800L1.300 12.700V4.600Z" fill="#3a3a3a"/><path d="M1.300 4.600L8.500 0.800L15.700 4.600L8.500 8.600Z" fill="#8fd6ff"/><path d="M8.500 8.600L15.700 4.600V12.700L8.500 16.800Z" fill="#62c4ff"/><path d="M1.300 8.200L5 5.800M1.300 11.200L8 6.800M2.600 13.400L8.400 9.600M5.400 15L8.400 13" stroke="#d8d8d8" stroke-width="1.300" fill="none"/></svg>
<div class="t" style="left:958.2px;top:234.30px;height:20px;line-height:20px;font-size:15.5px;color:#7da8ec;letter-spacing:-0.025px;">Player</div>
<svg style="left:921.5px;top:238.8px;" width="9" height="10.8" viewBox="0 0 9 10.8"><path d="M0 0V10.8L9 5.4Z" fill="#6e6e6e"/></svg>
<svg style="left:936.7px;top:256.1px;" width="16.6" height="17.637500000000003" viewBox="0 0 16 17"><g fill="none" stroke="#c2c2c2" stroke-width="1.35" stroke-linejoin="round"><path d="M8 0.9L14.8 4.6V12.4L8 16.1L1.2 12.4V4.6Z"/><path d="M1.2 4.6L8 8.4L14.8 4.6M8 8.4V16.1"/></g></svg>
<div class="t" style="left:958.2px;top:254.30px;height:20px;line-height:20px;font-size:15.5px;color:#c4c4c4;letter-spacing:0.213px;">InventoryCanvas</div>
<svg style="left:920.0px;top:260px;" width="11.5" height="9.5" viewBox="0 0 11.5 9.5"><path d="M0 0H11.500L5.750 9.500Z" fill="#6e6e6e"/></svg>
<svg style="left:954.1500000000001px;top:276.1px;" width="16.6" height="17.637500000000003" viewBox="0 0 16 17"><g fill="none" stroke="#c2c2c2" stroke-width="1.35" stroke-linejoin="round"><path d="M8 0.9L14.8 4.6V12.4L8 16.1L1.2 12.4V4.6Z"/><path d="M1.2 4.6L8 8.4L14.8 4.6M8 8.4V16.1"/></g></svg>
<div class="t" style="left:975.6500000000001px;top:274.30px;height:20px;line-height:20px;font-size:15.5px;color:#c4c4c4;letter-spacing:0.277px;">InventoryMenu</div>
<svg style="left:937.45px;top:280px;" width="11.5" height="9.5" viewBox="0 0 11.5 9.5"><path d="M0 0H11.500L5.750 9.500Z" fill="#6e6e6e"/></svg>
<svg style="left:971.6px;top:296.1px;" width="16.6" height="17.637500000000003" viewBox="0 0 16 17"><g fill="none" stroke="#c2c2c2" stroke-width="1.35" stroke-linejoin="round"><path d="M8 0.9L14.8 4.6V12.4L8 16.1L1.2 12.4V4.6Z"/><path d="M1.2 4.6L8 8.4L14.8 4.6M8 8.4V16.1"/></g></svg>
<div class="t" style="left:993.1px;top:294.30px;height:20px;line-height:20px;font-size:15.5px;color:#c4c4c4;letter-spacing:0.258px;">InventorySlots</div>
<svg style="left:956.4px;top:298.8px;" width="9" height="10.8" viewBox="0 0 9 10.8"><path d="M0 0V10.8L9 5.4Z" fill="#6e6e6e"/></svg>
<svg style="left:971.6px;top:316.1px;" width="16.6" height="17.637500000000003" viewBox="0 0 16 17"><g fill="none" stroke="#c2c2c2" stroke-width="1.35" stroke-linejoin="round"><path d="M8 0.9L14.8 4.6V12.4L8 16.1L1.2 12.4V4.6Z"/><path d="M1.2 4.6L8 8.4L14.8 4.6M8 8.4V16.1"/></g></svg>
<div class="t" style="left:993.1px;top:314.30px;height:20px;line-height:20px;font-size:15.5px;color:#c4c4c4;letter-spacing:0.303px;">InventoryDescription</div>
<svg style="left:954.9px;top:320px;" width="11.5" height="9.5" viewBox="0 0 11.5 9.5"><path d="M0 0H11.500L5.750 9.500Z" fill="#6e6e6e"/></svg>
<svg style="left:989.0500000000001px;top:336.1px;" width="16.6" height="17.637500000000003" viewBox="0 0 16 17"><g fill="none" stroke="#c2c2c2" stroke-width="1.35" stroke-linejoin="round"><path d="M8 0.9L14.8 4.6V12.4L8 16.1L1.2 12.4V4.6Z"/><path d="M1.2 4.6L8 8.4L14.8 4.6M8 8.4V16.1"/></g></svg>
<div class="t" style="left:1010.5500000000001px;top:334.30px;height:20px;line-height:20px;font-size:15.5px;color:#c4c4c4;letter-spacing:0.079px;">ItemImage</div>
<svg style="left:989.0500000000001px;top:356.1px;" width="16.6" height="17.637500000000003" viewBox="0 0 16 17"><g fill="none" stroke="#c2c2c2" stroke-width="1.35" stroke-linejoin="round"><path d="M8 0.9L14.8 4.6V12.4L8 16.1L1.2 12.4V4.6Z"/><path d="M1.2 4.6L8 8.4L14.8 4.6M8 8.4V16.1"/></g></svg>
<div class="t" style="left:1010.5500000000001px;top:354.30px;height:20px;line-height:20px;font-size:15.5px;color:#c4c4c4;letter-spacing:0.257px;">ItemDescription</div>
<svg style="left:972.35px;top:360px;" width="11.5" height="9.5" viewBox="0 0 11.5 9.5"><path d="M0 0H11.500L5.750 9.500Z" fill="#6e6e6e"/></svg>
<svg style="left:1006.5px;top:376.1px;" width="16.6" height="17.637500000000003" viewBox="0 0 16 17"><g fill="none" stroke="#c2c2c2" stroke-width="1.35" stroke-linejoin="round"><path d="M8 0.9L14.8 4.6V12.4L8 16.1L1.2 12.4V4.6Z"/><path d="M1.2 4.6L8 8.4L14.8 4.6M8 8.4V16.1"/></g></svg>
<div class="t" style="left:1028.0px;top:374.30px;height:20px;line-height:20px;font-size:15.5px;color:#c4c4c4;letter-spacing:0.335px;">ItemDescriptionNameText</div>
<svg style="left:1006.5px;top:396.1px;" width="16.6" height="17.637500000000003" viewBox="0 0 16 17"><g fill="none" stroke="#c2c2c2" stroke-width="1.35" stroke-linejoin="round"><path d="M8 0.9L14.8 4.6V12.4L8 16.1L1.2 12.4V4.6Z"/><path d="M1.2 4.6L8 8.4L14.8 4.6M8 8.4V16.1"/></g></svg>
<div class="t" style="left:1028.0px;top:394.30px;height:20px;line-height:20px;font-size:15.5px;color:#c4c4c4;letter-spacing:0.416px;">ItemDescriptionText</div>
<svg style="left:936.7px;top:416.1px;" width="16.6" height="17.637500000000003" viewBox="0 0 16 17"><g fill="none" stroke="#c2c2c2" stroke-width="1.35" stroke-linejoin="round"><path d="M8 0.9L14.8 4.6V12.4L8 16.1L1.2 12.4V4.6Z"/><path d="M1.2 4.6L8 8.4L14.8 4.6M8 8.4V16.1"/></g></svg>
<div class="t" style="left:958.2px;top:414.30px;height:20px;line-height:20px;font-size:15.5px;color:#c4c4c4;letter-spacing:0.161px;">EventSystem</div>
<svg style="left:936.7px;top:436.1px;" width="16.6" height="17.637500000000003" viewBox="0 0 16 17"><g fill="none" stroke="#c2c2c2" stroke-width="1.35" stroke-linejoin="round"><path d="M8 0.9L14.8 4.6V12.4L8 16.1L1.2 12.4V4.6Z"/><path d="M1.2 4.6L8 8.4L14.8 4.6M8 8.4V16.1"/></g></svg>
<div class="t" style="left:958.2px;top:434.30px;height:20px;line-height:20px;font-size:15.5px;color:#c4c4c4;letter-spacing:0.123px;">Burger</div>
<svg style="left:921.5px;top:438.8px;" width="9" height="10.8" viewBox="0 0 9 10.8"><path d="M0 0V10.8L9 5.4Z" fill="#6e6e6e"/></svg>
<svg style="left:936.7px;top:456.1px;" width="16.6" height="17.637500000000003" viewBox="0 0 16 17"><g fill="none" stroke="#c2c2c2" stroke-width="1.35" stroke-linejoin="round"><path d="M8 0.9L14.8 4.6V12.4L8 16.1L1.2 12.4V4.6Z"/><path d="M1.2 4.6L8 8.4L14.8 4.6M8 8.4V16.1"/></g></svg>
<div class="t" style="left:958.2px;top:454.30px;height:20px;line-height:20px;font-size:15.5px;color:#c4c4c4;letter-spacing:0.090px;">Coke</div>
<svg style="left:921.5px;top:458.8px;" width="9" height="10.8" viewBox="0 0 9 10.8"><path d="M0 0V10.8L9 5.4Z" fill="#6e6e6e"/></svg>
<div class="r" style="left:901.3px;top:235.5px;width:1.5px;height:19px;background:#3a8fd8;"></div>
<svg style="left:1421px;top:239px;" width="7" height="11" viewBox="0 0 7 11"><path d="M1 1L5.800 5.500L1 10" stroke="#8a8a8a" stroke-width="1.500" fill="none"/></svg>
<div class="r" style="left:1437px;top:99px;width:135.5px;height:31px;background:#3c3c3c;border-radius:4px 4px 0 0;"></div>
<svg style="left:1450.5px;top:108px;" width="13" height="13" viewBox="0 0 13 13"><circle cx="6.5" cy="6.5" r="6.3" fill="#c4c4c4"/><text x="6.500" y="10.400" text-anchor="middle" font-size="10.500" font-weight="bold" fill="#2a2a2a" font-family="Liberation Sans, sans-serif">i</text></svg>
<div class="t" style="left:1469px;top:103.40px;height:24px;line-height:24px;font-size:15.75px;color:#c4c4c4;letter-spacing:0.261px;">Inspector</div>
<svg style="left:1874.5px;top:107px;" width="12" height="14" viewBox="0 0 12 14"><rect x="0.75" y="6.75" width="9.5" height="6" fill="none" stroke="#c4c4c4" stroke-width="1.5"/><path d="M4.5 6.5V3.8a2.6 2.6 0 0 1 5.2 0V4.6" fill="none" stroke="#c4c4c4" stroke-width="1.5"/></svg>
<svg style="left:1899px;top:106px;" width="6" height="16" viewBox="0 0 6 16"><circle cx="3" cy="3.4000000000000004" r="1.4" fill="#c4c4c4"/><circle cx="3" cy="8.0" r="1.4" fill="#c4c4c4"/><circle cx="3" cy="12.6" r="1.4" fill="#c4c4c4"/></svg>
<div class="r" style="left:1437px;top:129px;width:482px;height:984px;background:#383838;"></div>
<svg style="left:1445.5px;top:142px;" width="25.5" height="27.09375" viewBox="0 0 16 17"><g fill="none" stroke="#c2c2c2" stroke-width="1.2" stroke-linejoin="round"><path d="M8 0.9L14.8 4.6V12.4L8 16.1L1.2 12.4V4.6Z"/><path d="M1.2 4.6L8 8.4L14.8 4.6M8 8.4V16.1"/></g></svg>
<svg style="left:1469.5px;top:168px;" width="8" height="5" viewBox="0 0 8 5"><path d="M0 0H8L4 5Z" fill="#a8a8a8"/></svg>
<div class="r" style="left:1496.3px;top:144px;width:16.5px;height:16.5px;background:#262626;border-radius:3px;border:1px solid #1d1d1d;"></div>
<svg style="left:1498.8px;top:147px;" width="12" height="11" viewBox="0 0 12 11"><path d="M1 5.500L4.400 9L10.800 1.500" fill="none" stroke="#e4e4e4" stroke-width="1.800"/></svg>
<div class="r" style="left:1520.5px;top:140.5px;width:299px;height:22.5px;background:#2a2a2a;border-radius:3px;border:1px solid #212121;"></div>
<div class="t" style="left:1523.8px;top:142.20px;height:22px;line-height:22px;font-size:15.5px;color:#e0e0e0;font-weight:bold;letter-spacing:0.059px;">ItemDescription</div>
<div class="r" style="left:1823.3px;top:143.5px;width:17px;height:17px;background:#262626;border-radius:3px;border:1px solid #1d1d1d;"></div>
<div class="t" style="left:1846px;top:140.50px;height:22px;line-height:22px;font-size:15.7px;color:#c4c4c4;letter-spacing:0.206px;">Static</div>
<svg style="left:1901px;top:149.5px;" width="9.6" height="5.2" viewBox="0 0 9.6 5.2"><path d="M0 0H9.6L4.8 5.2Z" fill="#c4c4c4"/></svg>
<div class="t" style="left:1487.5px;top:171.80px;height:22px;line-height:22px;font-size:15.7px;color:#c4c4c4;letter-spacing:0.354px;">Tag</div>
<div class="r" style="left:1519.7px;top:171px;width:172.6px;height:21.4px;background:#515151;border-radius:3px;border:1px solid #303030;"></div>
<div class="t" style="left:1524.5px;top:170.00px;height:22px;line-height:22px;font-size:15.7px;color:#c4c4c4;letter-spacing:0.108px;">Untagged</div>
<svg style="left:1675px;top:179px;" width="9.6" height="5.2" viewBox="0 0 9.6 5.2"><path d="M0 0H9.6L4.8 5.2Z" fill="#c4c4c4"/></svg>
<div class="t" style="left:1708px;top:171.80px;height:22px;line-height:22px;font-size:15.7px;color:#c4c4c4;letter-spacing:-0.061px;">Layer</div>
<div class="r" style="left:1753.3px;top:171px;width:159.7px;height:21.4px;background:#515151;border-radius:3px;border:1px solid #303030;"></div>
<div class="t" style="left:1758.5px;top:170.00px;height:22px;line-height:22px;font-size:15.7px;color:#c4c4c4;">UI</div>
<svg style="left:1896px;top:179px;" width="9.6" height="5.2" viewBox="0 0 9.6 5.2"><path d="M0 0H9.6L4.8 5.2Z" fill="#c4c4c4"/></svg>
<div class="r" style="left:1437px;top:203px;width:482px;height:29px;background:#3e3e3e;"></div>
<div class="r" style="left:1437px;top:203px;width:482px;height:1px;background:#1f1f1f;"></div>
<svg style="left:1446px;top:212.6px;" width="9" height="10.8" viewBox="0 0 9 10.8"><path d="M0 0V10.8L9 5.4Z" fill="#6e6e6e"/></svg>
<div class="t" style="left:1512px;top:207.00px;height:22px;line-height:22px;font-size:15.4px;color:#e0e0e0;font-weight:bold;letter-spacing:0.076px;">Rect Transform</div>
<svg style="left:1847px;top:211.5px;" width="13" height="13" viewBox="0 0 13 13"><circle cx="6.500" cy="6.500" r="6.300" fill="#c4c4c4"/></svg>
<div class="t" style="left:1847px;top:211.30px;height:14px;line-height:14px;font-size:11.5px;color:#333;font-weight:bold;width:13px;text-align:center;">?</div>
<svg style="left:1872px;top:211.5px;" width="14" height="13" viewBox="0 0 14 13"><g stroke="#c4c4c4" stroke-width="1.400" fill="none"><path d="M0.500 3H7M10.500 3H13.500M0.500 10H3.500M7 10H13.500"/><path d="M8.700 0.500V5.500M5.200 7.500V12.500" stroke-width="1.800"/></g></svg>
<svg style="left:1901px;top:210.0px;" width="6" height="16" viewBox="0 0 6 16"><circle cx="3" cy="3.4000000000000004" r="1.4" fill="#c4c4c4"/><circle cx="3" cy="8.0" r="1.4" fill="#c4c4c4"/><circle cx="3" cy="12.6" r="1.4" fill="#c4c4c4"/></svg>
<div class="r" style="left:1437px;top:232px;width:482px;height:28.5px;background:#3e3e3e;"></div>
<div class="r" style="left:1437px;top:232px;width:482px;height:1px;background:#1f1f1f;"></div>
<svg style="left:1446px;top:241.35px;" width="9" height="10.8" viewBox="0 0 9 10.8"><path d="M0 0V10.8L9 5.4Z" fill="#6e6e6e"/></svg>
<div class="t" style="left:1512px;top:235.75px;height:22px;line-height:22px;font-size:15.4px;color:#e0e0e0;font-weight:bold;letter-spacing:-0.027px;">Canvas Renderer</div>
<svg style="left:1847px;top:240.25px;" width="13" height="13" viewBox="0 0 13 13"><circle cx="6.500" cy="6.500" r="6.300" fill="#c4c4c4"/></svg>
<div class="t" style="left:1847px;top:240.05px;height:14px;line-height:14px;font-size:11.5px;color:#333;font-weight:bold;width:13px;text-align:center;">?</div>
<svg style="left:1872px;top:240.25px;" width="14" height="13" viewBox="0 0 14 13"><g stroke="#c4c4c4" stroke-width="1.400" fill="none"><path d="M0.500 3H7M10.500 3H13.500M0.500 10H3.500M7 10H13.500"/><path d="M8.700 0.500V5.500M5.200 7.500V12.500" stroke-width="1.800"/></g></svg>
<svg style="left:1901px;top:238.75px;" width="6" height="16" viewBox="0 0 6 16"><circle cx="3" cy="3.4000000000000004" r="1.4" fill="#c4c4c4"/><circle cx="3" cy="8.0" r="1.4" fill="#c4c4c4"/><circle cx="3" cy="12.6" r="1.4" fill="#c4c4c4"/></svg>
<div class="r" style="left:1437px;top:260.5px;width:482px;height:27.5px;background:#3e3e3e;"></div>
<div class="r" style="left:1437px;top:260.5px;width:482px;height:1px;background:#1f1f1f;"></div>
<svg style="left:1446px;top:269.35px;" width="9" height="10.8" viewBox="0 0 9 10.8"><path d="M0 0V10.8L9 5.4Z" fill="#6e6e6e"/></svg>
<div class="t" style="left:1512px;top:263.75px;height:22px;line-height:22px;font-size:15.4px;color:#e0e0e0;font-weight:bold;letter-spacing:0.020px;">Image</div>
<svg style="left:1847px;top:268.25px;" width="13" height="13" viewBox="0 0 13 13"><circle cx="6.500" cy="6.500" r="6.300" fill="#c4c4c4"/></svg>
<div class="t" style="left:1847px;top:268.05px;height:14px;line-height:14px;font-size:11.5px;color:#333;font-weight:bold;width:13px;text-align:center;">?</div>
<svg style="left:1872px;top:268.25px;" width="14" height="13" viewBox="0 0 14 13"><g stroke="#c4c4c4" stroke-width="1.400" fill="none"><path d="M0.500 3H7M10.500 3H13.500M0.500 10H3.500M7 10H13.500"/><path d="M8.700 0.500V5.500M5.200 7.500V12.500" stroke-width="1.800"/></g></svg>
<svg style="left:1901px;top:266.75px;" width="6" height="16" viewBox="0 0 6 16"><circle cx="3" cy="3.4000000000000004" r="1.4" fill="#c4c4c4"/><circle cx="3" cy="8.0" r="1.4" fill="#c4c4c4"/><circle cx="3" cy="12.6" r="1.4" fill="#c4c4c4"/></svg>
<div class="r" style="left:1437px;top:288px;width:482px;height:1px;background:#1f1f1f;"></div>
<svg style="left:1463.5px;top:209px;" width="18" height="17" viewBox="0 0 18 17"><g fill="#c4c4c4"><path d="M0.600 3.800L3.800 0.600L7.400 7Z"/><path d="M17.400 3.800L14.200 0.600L10.600 7Z"/><path d="M0.600 13.200L3.800 16.400L7.400 10Z"/><path d="M17.400 13.200L14.200 16.400L10.600 10Z"/></g></svg>
<svg style="left:1462.5px;top:239.5px;" width="21" height="14" viewBox="0 0 21 14"><path d="M0.800 7C4.500 1 16.500 1 20.200 7C16.500 13 4.500 13 0.800 7Z" fill="none" stroke="#d0d0d0" stroke-width="1.500"/><circle cx="10.500" cy="7" r="3.200" fill="none" stroke="#d0d0d0" stroke-width="1.500"/></svg>
<svg style="left:1463px;top:266px;" width="19" height="17" viewBox="0 0 19 17"><g fill="none" stroke="#c4c4c4" stroke-width="1.300"><rect x="2.600" y="2.600" width="13.800" height="11.800"/></g><g fill="#c4c4c4"><rect x="0.500" y="0.500" width="3.600" height="3.600"/><rect x="14.900" y="0.500" width="3.600" height="3.600"/><rect x="0.500" y="12.900" width="3.600" height="3.600"/><rect x="14.900" y="12.900" width="3.600" height="3.600"/><path d="M4.500 12.500L8 7.500L10.500 10.500L12 9L14.500 12.500Z"/><circle cx="12" cy="6" r="1.300"/></g></svg>
<div class="r" style="left:1487.5px;top:265.7px;width:16.5px;height:16.5px;background:#262626;border-radius:3px;border:1px solid #1d1d1d;"></div>
<svg style="left:1490.0px;top:268.7px;" width="12" height="11" viewBox="0 0 12 11"><path d="M1 5.500L4.400 9L10.800 1.500" fill="none" stroke="#e4e4e4" stroke-width="1.800"/></svg>
<div class="r" style="left:1457px;top:296px;width:40px;height:40px;background:#4f4f4f;"></div>
<div class="r" style="left:1461.5px;top:301px;width:31px;height:30px;background:#ffffff;"></div>
<div class="t" style="left:1506.4px;top:291.80px;height:24px;line-height:24px;font-size:17px;color:#c4c4c4;letter-spacing:0.092px;">Default UI Material (Material)</div>
<svg style="left:1883px;top:297.5px;" width="13" height="13" viewBox="0 0 13 13"><circle cx="6.500" cy="6.500" r="6.300" fill="#c4c4c4"/></svg>
<div class="t" style="left:1883px;top:297.30px;height:14px;line-height:14px;font-size:11.5px;color:#333;font-weight:bold;width:13px;text-align:center;">?</div>
<svg style="left:1907px;top:296px;" width="6" height="16" viewBox="0 0 6 16"><circle cx="3" cy="3.4000000000000004" r="1.4" fill="#c4c4c4"/><circle cx="3" cy="8.0" r="1.4" fill="#c4c4c4"/><circle cx="3" cy="12.6" r="1.4" fill="#c4c4c4"/></svg>
<div class="t" style="left:1503.6px;top:324.20px;height:22px;line-height:22px;font-size:15.7px;color:#8c8c8c;letter-spacing:-0.223px;">Shader</div>
<div class="r" style="left:1567.5px;top:324px;width:225.5px;height:21.5px;background:#454545;border-radius:3px;border:1px solid #353535;"></div>
<div class="t" style="left:1572.5px;top:323.70px;height:22px;line-height:22px;font-size:15.7px;color:#8a8a8a;letter-spacing:0.126px;">UI/Default</div>
<svg style="left:1776px;top:332px;" width="9.6" height="5.2" viewBox="0 0 9.6 5.2"><path d="M0 0H9.6L4.8 5.2Z" fill="#8a8a8a"/></svg>
<div class="r" style="left:1798.5px;top:324px;width:56px;height:21.5px;background:#585858;border-radius:3px;border:1px solid #303030;"></div>
<div class="t" style="left:1799px;top:323.70px;height:22px;line-height:22px;font-size:15.7px;color:#e0e0e0;width:55px;text-align:center;">Edit...</div>
<div class="r" style="left:1859.5px;top:324px;width:54px;height:21.5px;background:#585858;border-radius:3px;border:1px solid #303030;"></div>
<svg style="left:1871px;top:328.5px;" width="14" height="12" viewBox="0 0 14 12"><g fill="#c4c4c4"><rect x="0" y="0.400" width="2" height="2"/><rect x="3.400" y="0.600" width="10" height="1.500"/><rect x="3.400" y="5" width="2" height="2"/><rect x="6.600" y="5.200" width="6.800" height="1.500"/><rect x="3.400" y="9.600" width="2" height="2"/><rect x="6.600" y="9.800" width="6.800" height="1.500"/></g></svg>
<svg style="left:1896.5px;top:332px;" width="9.6" height="5.2" viewBox="0 0 9.6 5.2"><path d="M0 0H9.6L4.8 5.2Z" fill="#c4c4c4"/></svg>
<svg style="left:1446px;top:336.2px;" width="9" height="10.8" viewBox="0 0 9 10.8"><path d="M0 0V10.8L9 5.4Z" fill="#6e6e6e"/></svg>
<div class="r" style="left:1437px;top:356px;width:482px;height:1px;background:#2a2a2a;"></div>
<div class="r" style="left:1437px;top:370px;width:482px;height:1.5px;background:#1f1f1f;"></div>
<div class="r" style="left:1535.4px;top:382.2px;width:284.6px;height:27.5px;background:#686868;border-radius:3px 3px 0 0;"></div>
<div class="t" style="left:1535.4px;top:384.00px;height:24px;line-height:24px;font-size:15.7px;color:#e4e4e4;width:284.6px;text-align:center;letter-spacing:0.1px;">Add Component</div>
<div class="r" style="left:1535.4px;top:411px;width:287.3px;height:393.5px;background:#383838;border:1px solid #242424;"></div>
<div class="r" style="left:1541.4px;top:417.5px;width:273.3px;height:19px;background:#2a2a2a;border-radius:4px;border:1px solid #3a79bb;"></div>
<svg style="left:1547px;top:422px;" width="10" height="10" viewBox="0 0 10 10"><circle cx="3.800" cy="3.800" r="2.600" fill="none" stroke="#c4c4c4" stroke-width="1.500"/><path d="M5.800 5.800L9 9" stroke="#c4c4c4" stroke-width="1.800"/></svg>
<div class="t" style="left:1559px;top:418.00px;height:18px;line-height:18px;font-size:15.7px;color:#d2d2d2;letter-spacing:-0.249px;">vert</div>
<div class="r" style="left:1585.3px;top:419.5px;width:1px;height:15px;background:#d2d2d2;"></div>
<svg style="left:1801.5px;top:423.5px;" width="8" height="8" viewBox="0 0 8 8"><path d="M0.500 0.500L7.500 7.500M7.500 0.500L0.500 7.500" stroke="#c4c4c4" stroke-width="1.100"/></svg>
<div class="r" style="left:1536.4px;top:444.5px;width:285.3px;height:25.5px;background:#404040;"></div>
<div class="t" style="left:1536.4px;top:445.80px;height:22px;line-height:22px;font-size:15.4px;color:#c8c8c8;font-weight:bold;width:284px;text-align:center;">Search</div>
<div class="r" style="left:1536.4px;top:470.2px;width:268.6px;height:25px;background:#3e5f96;"></div>
<svg style="left:1540.5px;top:475.5px;" width="15" height="15" viewBox="0 0 15 15"><rect x="0.600" y="0.600" width="13.800" height="13.800" rx="1.500" fill="none" stroke="#c4c4c4" stroke-width="1.200"/><path d="M3 4.200H12M3 7.500H12M3 10.800H12" stroke="#d8d8d8" stroke-width="1.700"/></svg>
<div class="t" style="left:1559px;top:471.80px;height:22px;line-height:22px;font-size:15.7px;color:#f0f0f0;letter-spacing:0.118px;">Vertical Layout Group</div>
<div class="t" style="left:1559px;top:496.80px;height:22px;line-height:22px;font-size:15.7px;color:#c4c4c4;letter-spacing:0.286px;">New script</div>
<svg style="left:1792.5px;top:502px;" width="7" height="12" viewBox="0 0 7 12"><path d="M1 1L6 6L1 11" stroke="#a8a8a8" stroke-width="1.500" fill="none"/></svg>
<div class="r" style="left:1437px;top:885px;width:482px;height:27.5px;background:#3c3c3c;"></div>
<div class="r" style="left:1437px;top:884.5px;width:482px;height:1px;background:#232323;"></div>
<div class="r" style="left:1437px;top:912px;width:482px;height:1px;background:#232323;"></div>
<div class="r" style="left:1442px;top:886px;width:1px;height:26px;background:#2c2c2c;"></div>
<div class="r" style="left:1584.3px;top:886px;width:1px;height:26px;background:#2c2c2c;"></div>
<div class="r" style="left:1898.3px;top:886px;width:1px;height:26px;background:#2c2c2c;"></div>
<div class="t" style="left:1447px;top:887.80px;height:22px;line-height:22px;font-size:15.4px;color:#e0e0e0;font-weight:bold;letter-spacing:0.112px;">ItemDescription</div>
<svg style="left:1570px;top:896.5px;" width="9" height="5.5" viewBox="0 0 9 5.5"><path d="M0 0H9L4.500 5.500Z" fill="#d0d0d0"/></svg>
<div class="r" style="left:1589px;top:896.5px;width:307px;height:1px;background:#5e5e5e;"></div>
<div class="r" style="left:1589px;top:900.8px;width:307px;height:1px;background:#5e5e5e;"></div>
<svg style="left:1907px;top:890.5px;" width="6" height="16" viewBox="0 0 6 16"><circle cx="3" cy="3.4000000000000004" r="1.4" fill="#c4c4c4"/><circle cx="3" cy="8.0" r="1.4" fill="#c4c4c4"/><circle cx="3" cy="12.6" r="1.4" fill="#c4c4c4"/></svg>
<div class="r" style="left:1437px;top:913px;width:482px;height:191px;background:#313131;"></div>
<svg style="left:1582px;top:913px;overflow:hidden" width="192" height="191" viewBox="0 0 192 191"><rect x="0" y="0" width="192" height="191" fill="#4a4a4a"/><rect x="-4.0" y="19.6" width="20.1" height="20.1" fill="#5c5c5c"/><rect x="-4.0" y="59.8" width="20.1" height="20.1" fill="#5c5c5c"/><rect x="-4.0" y="100.0" width="20.1" height="20.1" fill="#5c5c5c"/><rect x="-4.0" y="140.2" width="20.1" height="20.1" fill="#5c5c5c"/><rect x="-4.0" y="180.4" width="20.1" height="20.1" fill="#5c5c5c"/><rect x="16.1" y="-0.5" width="20.1" height="20.1" fill="#5c5c5c"/><rect x="16.1" y="39.7" width="20.1" height="20.1" fill="#5c5c5c"/><rect x="16.1" y="79.9" width="20.1" height="20.1" fill="#5c5c5c"/><rect x="16.1" y="120.1" width="20.1" height="20.1" fill="#5c5c5c"/><rect x="16.1" y="160.3" width="20.1" height="20.1" fill="#5c5c5c"/><rect x="36.2" y="19.6" width="20.1" height="20.1" fill="#5c5c5c"/><rect x="36.2" y="59.8" width="20.1" height="20.1" fill="#5c5c5c"/><rect x="36.2" y="100.0" width="20.1" height="20.1" fill="#5c5c5c"/><rect x="36.2" y="140.2" width="20.1" height="20.1" fill="#5c5c5c"/><rect x="36.2" y="180.4" width="20.1" height="20.1" fill="#5c5c5c"/><rect x="56.3" y="-0.5" width="20.1" height="20.1" fill="#5c5c5c"/><rect x="56.3" y="39.7" width="20.1" height="20.1" fill="#5c5c5c"/><rect x="56.3" y="79.9" width="20.1" height="20.1" fill="#5c5c5c"/><rect x="56.3" y="120.1" width="20.1" height="20.1" fill="#5c5c5c"/><rect x="56.3" y="160.3" width="20.1" height="20.1" fill="#5c5c5c"/><rect x="76.4" y="19.6" width="20.1" height="20.1" fill="#5c5c5c"/><rect x="76.4" y="59.8" width="20.1" height="20.1" fill="#5c5c5c"/><rect x="76.4" y="100.0" width="20.1" height="20.1" fill="#5c5c5c"/><rect x="76.4" y="140.2" width="20.1" height="20.1" fill="#5c5c5c"/><rect x="76.4" y="180.4" width="20.1" height="20.1" fill="#5c5c5c"/><rect x="96.5" y="-0.5" width="20.1" height="20.1" fill="#5c5c5c"/><rect x="96.5" y="39.7" width="20.1" height="20.1" fill="#5c5c5c"/><rect x="96.5" y="79.9" width="20.1" height="20.1" fill="#5c5c5c"/><rect x="96.5" y="120.1" width="20.1" height="20.1" fill="#5c5c5c"/><rect x="96.5" y="160.3" width="20.1" height="20.1" fill="#5c5c5c"/><rect x="116.6" y="19.6" width="20.1" height="20.1" fill="#5c5c5c"/><rect x="116.6" y="59.8" width="20.1" height="20.1" fill="#5c5c5c"/><rect x="116.6" y="100.0" width="20.1" height="20.1" fill="#5c5c5c"/><rect x="116.6" y="140.2" width="20.1" height="20.1" fill="#5c5c5c"/><rect x="116.6" y="180.4" width="20.1" height="20.1" fill="#5c5c5c"/><rect x="136.7" y="-0.5" width="20.1" height="20.1" fill="#5c5c5c"/><rect x="136.7" y="39.7" width="20.1" height="20.1" fill="#5c5c5c"/><rect x="136.7" y="79.9" width="20.1" height="20.1" fill="#5c5c5c"/><rect x="136.7" y="120.1" width="20.1" height="20.1" fill="#5c5c5c"/><rect x="136.7" y="160.3" width="20.1" height="20.1" fill="#5c5c5c"/><rect x="156.8" y="19.6" width="20.1" height="20.1" fill="#5c5c5c"/><rect x="156.8" y="59.8" width="20.1" height="20.1" fill="#5c5c5c"/><rect x="156.8" y="100.0" width="20.1" height="20.1" fill="#5c5c5c"/><rect x="156.8" y="140.2" width="20.1" height="20.1" fill="#5c5c5c"/><rect x="156.8" y="180.4" width="20.1" height="20.1" fill="#5c5c5c"/><rect x="176.9" y="-0.5" width="20.1" height="20.1" fill="#5c5c5c"/><rect x="176.9" y="39.7" width="20.1" height="20.1" fill="#5c5c5c"/><rect x="176.9" y="79.9" width="20.1" height="20.1" fill="#5c5c5c"/><rect x="176.9" y="120.1" width="20.1" height="20.1" fill="#5c5c5c"/><rect x="176.9" y="160.3" width="20.1" height="20.1" fill="#5c5c5c"/><defs><filter id="blr" x="-10%" y="-10%" width="120%" height="120%"><feGaussianBlur stdDeviation="1.800"/></filter></defs><rect x="14" y="13.500" width="165" height="154.500" rx="34" fill="#2e2e2e" filter="url(#blr)" opacity="0.95"/><rect x="17.500" y="17" width="158" height="147.500" rx="31" fill="#dcdcdc" filter="url(#blr)"/><rect x="20" y="19.500" width="153" height="142.500" rx="29" fill="#dcdcdc"/><path d="M59.5 0V191" stroke="#f4f4f4" stroke-width="1.200"/><path d="M59.5 0V191" stroke="#1c1c1c" stroke-width="1.200" stroke-dasharray="8 7" stroke-dashoffset="-5"/><path d="M131.5 0V191" stroke="#f4f4f4" stroke-width="1.200"/><path d="M131.5 0V191" stroke="#1c1c1c" stroke-width="1.200" stroke-dasharray="8 7" stroke-dashoffset="-5"/><path d="M0 61.5H192" stroke="#f4f4f4" stroke-width="1.200"/><path d="M0 61.5H192" stroke="#1c1c1c" stroke-width="1.200" stroke-dasharray="8 7" stroke-dashoffset="-5"/><path d="M0 133.5H192" stroke="#f4f4f4" stroke-width="1.200"/><path d="M0 133.5H192" stroke="#1c1c1c" stroke-width="1.200" stroke-dasharray="8 7" stroke-dashoffset="-5"/></svg>
<div class="t" style="left:1582px;top:1062.50px;height:18px;line-height:18px;font-size:15.2px;color:#fff;font-weight:bold;width:192px;text-align:center;text-shadow:0 1px 1px #000,0 2px 2px #000,1px 1px 1px #000,-1px 1px 1px #000,0 0 3px #000;letter-spacing:0.168px;">ItemDescription</div>
<div class="t" style="left:1582px;top:1080.30px;height:18px;line-height:18px;font-size:15.2px;color:#fff;font-weight:bold;width:192px;text-align:center;text-shadow:0 1px 1px #000,0 2px 2px #000,1px 1px 1px #000,-1px 1px 1px #000,0 0 3px #000;letter-spacing:0.320px;">Image Size: 32x32</div>
<div class="r" style="left:1437px;top:1104px;width:482px;height:9px;background:#3c3c3c;"></div>
<div class="r" style="left:1437px;top:1104px;width:482px;height:1px;background:#232323;"></div>
<div class="r" style="left:125px;top:687px;width:110px;height:31px;background:#3c3c3c;border-radius:4px 4px 0 0;"></div>
<svg style="left:12.5px;top:696px;" width="13" height="13" viewBox="0 0 13 13"><rect x="0.700" y="0.700" width="11.600" height="11.600" fill="none" stroke="#c4c4c4" stroke-width="1.400"/><path d="M2.600 3.600H10.400M2.600 6.500H10.400M2.600 9.400H10.400" stroke="#c4c4c4" stroke-width="1.500"/></svg>
<div class="t" style="left:31.3px;top:692.10px;height:24px;line-height:24px;font-size:15.7px;color:#c4c4c4;letter-spacing:-0.108px;">Console</div>
<svg style="left:136px;top:697.5px;" width="18" height="11" viewBox="0 0 18 11"><path d="M5 0.500H13A5 5 0 0 1 13 10.500C11.500 10.500 10.800 9 9 9C7.200 9 6.500 10.500 5 10.500A5 5 0 0 1 5 0.500Z" fill="#c4c4c4"/><path d="M5 3.200V7.800M2.700 5.500H7.300" stroke="#3c3c3c" stroke-width="1.400"/><circle cx="12" cy="7" r="1.100" fill="#3c3c3c"/><circle cx="14" cy="4.200" r="1.100" fill="#3c3c3c"/></svg>
<div class="t" style="left:157.2px;top:692.10px;height:24px;line-height:24px;font-size:15.7px;color:#c4c4c4;letter-spacing:-0.501px;">Game</div>
<svg style="left:939px;top:693.8px;" width="6" height="16" viewBox="0 0 6 16"><circle cx="3" cy="3.4000000000000004" r="1.4" fill="#c4c4c4"/><circle cx="3" cy="8.0" r="1.4" fill="#c4c4c4"/><circle cx="3" cy="12.6" r="1.4" fill="#c4c4c4"/></svg>
<div class="r" style="left:0px;top:717px;width:959px;height:25.5px;background:#3c3c3c;"></div>
<div class="t" style="left:5.4px;top:720.20px;height:22px;line-height:22px;font-size:15.7px;color:#c4c4c4;letter-spacing:-0.616px;">Game</div>
<svg style="left:98.4px;top:728px;" width="9.6" height="5.2" viewBox="0 0 9.6 5.2"><path d="M0 0H9.6L4.8 5.2Z" fill="#c4c4c4"/></svg>
<div class="r" style="left:113.5px;top:717.5px;width:1.2px;height:25px;background:#2a2a2a;"></div>
<div class="t" style="left:125px;top:720.20px;height:22px;line-height:22px;font-size:15.7px;color:#c4c4c4;letter-spacing:-0.256px;">Display 1</div>
<svg style="left:205px;top:728px;" width="9.6" height="5.2" viewBox="0 0 9.6 5.2"><path d="M0 0H9.6L4.8 5.2Z" fill="#c4c4c4"/></svg>
<div class="r" style="left:219.5px;top:717.5px;width:1.2px;height:25px;background:#2a2a2a;"></div>
<div class="t" style="left:225px;top:720.20px;height:22px;line-height:22px;font-size:15.7px;color:#c4c4c4;letter-spacing:-0.117px;">Full HD (1920x1080)</div>
<svg style="left:404.7px;top:728px;" width="9.6" height="5.2" viewBox="0 0 9.6 5.2"><path d="M0 0H9.6L4.8 5.2Z" fill="#c4c4c4"/></svg>
<div class="r" style="left:420px;top:717.5px;width:1.2px;height:25px;background:#2a2a2a;"></div>
<div class="t" style="left:429.6px;top:720.20px;height:22px;line-height:22px;font-size:15.7px;color:#c4c4c4;letter-spacing:-0.417px;">Scale</div>
<div class="r" style="left:481px;top:730.7px;width:46px;height:2px;background:#5e5e5e;border-radius:1px;"></div>
<div class="r" style="left:474.8px;top:725.4px;width:12.4px;height:12.4px;background:#c0c0c0;border-radius:50%;"></div>
<div class="t" style="left:535.5px;top:720.20px;height:22px;line-height:22px;font-size:15.7px;color:#c4c4c4;letter-spacing:0.243px;">0.34x</div>
<div class="r" style="left:586px;top:717.5px;width:1.2px;height:25px;background:#2a2a2a;"></div>
<div class="t" style="left:591.3px;top:720.20px;height:22px;line-height:22px;font-size:15.7px;color:#c4c4c4;letter-spacing:-0.032px;">Play Maximized</div>
<svg style="left:708.5px;top:728px;" width="9.6" height="5.2" viewBox="0 0 9.6 5.2"><path d="M0 0H9.6L4.8 5.2Z" fill="#c4c4c4"/></svg>
<div class="r" style="left:724px;top:717.5px;width:1.2px;height:25px;background:#2a2a2a;"></div>
<svg style="left:731px;top:721.3px;" width="18" height="18" viewBox="0 0 18 18"><g fill="#c4c4c4"><ellipse cx="9" cy="10.6" rx="4.6" ry="5.6"/><path d="M5.6 5.6a3.4 3 0 0 1 6.8 0Z"/></g><g stroke="#c4c4c4" stroke-width="1.2" fill="none"><path d="M6.4 3.6L4.8 1.4M11.6 3.6L13.2 1.4M4.6 8L1.6 6.4M13.4 8L16.4 6.4M4.4 11H1M13.6 11H17M4.8 14L2 16.4M13.2 14L16 16.4"/></g></svg>
<div class="r" style="left:756px;top:717.5px;width:1.2px;height:25px;background:#2a2a2a;"></div>
<svg style="left:763.5px;top:722.5px;" width="18" height="15" viewBox="0 0 18 15"><path d="M1 4.800H3.800L8 1.200V13.800L3.800 10.200H1Z" fill="#e0e0e0"/><path d="M10.600 4.600A3.600 3.600 0 0 1 10.600 10.400M13 2.600A6.400 6.400 0 0 1 13 12.400" stroke="#e0e0e0" stroke-width="1.400" fill="none"/></svg>
<div class="r" style="left:789.4px;top:717.5px;width:1.2px;height:25px;background:#2a2a2a;"></div>
<svg style="left:796px;top:724px;" width="19" height="12" viewBox="0 0 19 12"><rect x="0.700" y="0.700" width="17.600" height="10.600" fill="none" stroke="#d0d0d0" stroke-width="1.400"/><path d="M0.700 4.200H18.300M0.700 7.800H18.300M4.600 0.700V4.200M8.200 0.700V4.200M11.800 0.700V4.200M15.400 0.700V4.200M6.400 4.200V7.800M10 4.200V7.800M13.600 4.200V7.800M4.600 7.800V11.300M15.400 7.800V11.300" stroke="#d0d0d0" stroke-width="1.200"/></svg>
<div class="r" style="left:821px;top:717.5px;width:1.2px;height:25px;background:#2a2a2a;"></div>
<div class="t" style="left:828px;top:720.20px;height:22px;line-height:22px;font-size:15.7px;color:#c4c4c4;letter-spacing:0.049px;">Stats</div>
<div class="r" style="left:871px;top:717.5px;width:1.2px;height:25px;background:#2a2a2a;"></div>
<div class="t" style="left:876px;top:720.20px;height:22px;line-height:22px;font-size:15.7px;color:#c4c4c4;letter-spacing:-0.129px;">Gizmos</div>
<div class="r" style="left:936px;top:722px;width:1px;height:16px;background:#2a2a2a;"></div>
<svg style="left:942.5px;top:728px;" width="9.6" height="5.2" viewBox="0 0 9.6 5.2"><path d="M0 0H9.6L4.8 5.2Z" fill="#c4c4c4"/></svg>
<div class="r" style="left:0px;top:742.5px;width:959px;height:370px;background:#282828;"></div>
<svg style="left:151px;top:742.500px;overflow:hidden" width="655.500" height="370" viewBox="151 742.500 655.500 370"><rect x="151" y="742.500" width="655.500" height="370" fill="#151127"/><path d="M286 872H347L374 850L399 846H545L650 886H722V1000H620V1038H545L500 1046L286 1000Z" fill="#464e84"/><path d="M399 846H545L650 886H722V892H640L540 856H399Z" fill="#30345e"/><path d="M395 850H545L600 872L560 880L520 862H395Z" fill="#3c4274"/><path d="M288 984H440C480 986 520 1008 553 1028V1042L518 1040C490 1018 470 1000 430 994H288Z" fill="#3a7a9a"/><path d="M430 994C470 1000 500 1020 520 1040L553 1042V1048L500 1044C480 1022 460 1008 430 1002Z" fill="#2c5c82"/><rect x="279.500" y="872" width="7" height="16.500" rx="1" fill="#c45a4e"/><rect x="279.500" y="890" width="7" height="16.500" rx="1" fill="#c45a4e"/><rect x="279.500" y="908" width="7" height="16.500" rx="1" fill="#c45a4e"/><rect x="279.500" y="926" width="7" height="16.500" rx="1" fill="#c45a4e"/><rect x="279.500" y="944" width="7" height="16.500" rx="1" fill="#c45a4e"/><rect x="279.500" y="962" width="7" height="16.500" rx="1" fill="#c45a4e"/><rect x="279.500" y="980" width="7" height="16.500" rx="1" fill="#c45a4e"/><rect x="279.500" y="998" width="7" height="16.500" rx="1" fill="#c45a4e"/><rect x="250" y="864.500" width="30" height="4.500" fill="#9a3340"/><rect x="280" y="863" width="5" height="16" fill="#6a58b0"/><rect x="268" y="982" width="8" height="6" fill="#6a58b0"/><rect x="262" y="988" width="16" height="8" fill="#6a58b0"/><rect x="392" y="837" width="16" height="8" fill="#c45a4e"/><rect x="392" y="844" width="16" height="1.500" fill="#f0c8a8"/><rect x="410" y="837" width="16" height="8" fill="#c45a4e"/><rect x="410" y="844" width="16" height="1.500" fill="#f0c8a8"/><rect x="428" y="837" width="16" height="8" fill="#c45a4e"/><rect x="428" y="844" width="16" height="1.500" fill="#f0c8a8"/><rect x="446" y="837" width="16" height="8" fill="#c45a4e"/><rect x="446" y="844" width="16" height="1.500" fill="#f0c8a8"/><rect x="464" y="837" width="16" height="8" fill="#c45a4e"/><rect x="464" y="844" width="16" height="1.500" fill="#f0c8a8"/><rect x="482" y="837" width="16" height="8" fill="#c45a4e"/><rect x="482" y="844" width="16" height="1.500" fill="#f0c8a8"/><rect x="500" y="837" width="16" height="8" fill="#c45a4e"/><rect x="500" y="844" width="16" height="1.500" fill="#f0c8a8"/><rect x="518" y="837" width="16" height="8" fill="#c45a4e"/><rect x="518" y="844" width="16" height="1.500" fill="#f0c8a8"/><rect x="536" y="837" width="16" height="8" fill="#c45a4e"/><rect x="536" y="844" width="16" height="1.500" fill="#f0c8a8"/><g transform="translate(546.0 838.0) rotate(20)"><rect x="0" y="0" width="14" height="8" fill="#c45a4e"/><rect x="0" y="7" width="14" height="1.500" fill="#f0c8a8"/></g><g transform="translate(561.5 843.8) rotate(20)"><rect x="0" y="0" width="14" height="8" fill="#c45a4e"/><rect x="0" y="7" width="14" height="1.500" fill="#f0c8a8"/></g><g transform="translate(577.0 849.6) rotate(20)"><rect x="0" y="0" width="14" height="8" fill="#c45a4e"/><rect x="0" y="7" width="14" height="1.500" fill="#f0c8a8"/></g><g transform="translate(592.5 855.4) rotate(20)"><rect x="0" y="0" width="14" height="8" fill="#c45a4e"/><rect x="0" y="7" width="14" height="1.500" fill="#f0c8a8"/></g><g transform="translate(608.0 861.2) rotate(20)"><rect x="0" y="0" width="14" height="8" fill="#c45a4e"/><rect x="0" y="7" width="14" height="1.500" fill="#f0c8a8"/></g><g transform="translate(623.5 867.0) rotate(20)"><rect x="0" y="0" width="14" height="8" fill="#c45a4e"/><rect x="0" y="7" width="14" height="1.500" fill="#f0c8a8"/></g><g transform="translate(639.0 872.8) rotate(20)"><rect x="0" y="0" width="14" height="8" fill="#c45a4e"/><rect x="0" y="7" width="14" height="1.500" fill="#f0c8a8"/></g><rect x="658" y="873" width="16" height="7" fill="#c45a4e"/><rect x="676" y="873" width="16" height="7" fill="#c45a4e"/><rect x="700" y="866" width="28" height="13" fill="#c45a4e"/><rect x="700" y="866" width="28" height="3" fill="#9a3340"/><rect x="693.500" y="862" width="4.500" height="17" fill="#6a58b0"/><rect x="660" y="846" width="12" height="4" fill="#9a3340"/><rect x="676" y="855" width="12" height="4" fill="#9a3340"/><rect x="672" y="862" width="10" height="4" fill="#9a3340"/><rect x="338" y="866" width="10" height="6" rx="3" fill="#9a3340"/><rect x="344" y="860" width="9" height="5" rx="2.500" fill="#9a3340"/><rect x="339" y="873" width="3.500" height="9" fill="#c45a4e"/><rect x="344" y="873" width="3.500" height="9" fill="#c45a4e"/><path d="M361 872L373 862L379 862L367 872Z" fill="#c45a4e"/><path d="M366 872L378 862" stroke="#f0c8a8" stroke-width="1"/><rect x="339" y="970" width="3.500" height="9" fill="#c45a4e"/><rect x="344" y="970" width="3.500" height="9" fill="#c45a4e"/><rect x="339" y="980" width="9" height="6" fill="#6a58b0"/><rect x="339" y="994" width="3.500" height="8" fill="#c45a4e"/><rect x="344" y="994" width="3.500" height="8" fill="#c45a4e"/><path d="M345 968V936C345 928 352 925 362 925C368 925 372 927 375 929" fill="none" stroke="#4a6aa8" stroke-width="2.200" stroke-dasharray="3 1.200"/><rect x="326" y="922" width="8" height="4" fill="#f0b030"/><rect x="322" y="928" width="16" height="3" fill="#5a68b8"/><rect x="387" y="922" width="8" height="4" fill="#f0b030"/><rect x="383" y="928" width="16" height="3" fill="#5a68b8"/><rect x="398" y="966" width="8" height="14" fill="#e8b020"/><rect x="399" y="971" width="6" height="3" fill="#4c9a3c"/><rect x="399" y="975" width="6" height="2" fill="#8a3020"/><rect x="458" y="935" width="8" height="8" fill="#c45a4e"/><rect x="460" y="925" width="3" height="9" fill="#5a68b8"/><rect x="458" y="948" width="8" height="7" fill="#c45a4e"/><path d="M289 984h12l-2 7h-8ZM305 984h12l-2 7h-8Z" fill="#d89838"/><rect x="328" y="985" width="7" height="6" fill="#6a58b0"/><rect x="385" y="985" width="7" height="6" fill="#6a58b0"/><rect x="370" y="988" width="12" height="4" fill="#9a3340"/><rect x="340" y="988" width="10" height="4" fill="#9a3340"/><path d="M408 991c0 -7 4 -8 8 -8s8 1 8 8" fill="none" stroke="#2a2c58" stroke-width="2.500"/><rect x="398" y="994" width="8" height="7" fill="#c45a4e"/><rect x="279.500" y="994" width="7" height="8" fill="#c45a4e"/><rect x="281" y="1006" width="6" height="4.500" rx="2" fill="#9a3340"/><rect x="283" y="1012" width="6" height="4.500" rx="2" fill="#9a3340"/><rect x="280" y="1018" width="6" height="4.500" rx="2" fill="#9a3340"/><rect x="283" y="1024" width="6" height="4.500" rx="2" fill="#9a3340"/><rect x="518" y="911" width="9" height="8.500" fill="#c45a4e"/><rect x="518" y="911" width="9" height="1.500" fill="#f0c8a8"/><rect x="528.5" y="911" width="17" height="8.500" fill="#c45a4e"/><rect x="528.5" y="911" width="17" height="1.500" fill="#f0c8a8"/><rect x="546" y="911" width="17" height="8.500" fill="#c45a4e"/><rect x="546" y="911" width="17" height="1.500" fill="#f0c8a8"/><rect x="564.5" y="911" width="17" height="8.500" fill="#c45a4e"/><rect x="564.5" y="911" width="17" height="1.500" fill="#f0c8a8"/><path d="M519 908c0 -7 4 -9 9 -9s9 2 9 9Z" fill="#3c4cb0"/><path d="M520 907c0 -6 4 -7.500 8 -7.500s8 1.500 8 7.500" fill="none" stroke="#7c9cf0" stroke-width="1.200"/><rect x="518" y="906" width="20" height="3.500" fill="#5240a8"/><rect x="547" y="898" width="9" height="12" fill="none" stroke="#c45a4e" stroke-width="1.500"/><rect x="526" y="955" width="16" height="7" fill="#2e2c56"/><rect x="519" y="966" width="12" height="7" rx="2" fill="#2e2c56"/><rect x="527" y="980" width="16" height="7" fill="#2e2c56"/><rect x="444" y="858" width="2" height="6" fill="#6a9ae0"/><rect x="464" y="858" width="2" height="6" fill="#6a9ae0"/><g transform="translate(518 1022) rotate(22)"><rect x="0" y="0" width="9" height="8" fill="#c45a4e"/><rect x="11" y="0" width="16" height="8" fill="#c45a4e"/></g><g transform="translate(458 1003) rotate(24)"><rect x="0" y="0" width="9" height="6" fill="#c45a4e"/></g><rect x="548" y="1032" width="15.500" height="7.500" fill="#c45a4e"/><rect x="548" y="1032" width="15.500" height="1.500" fill="#f0c8a8"/><rect x="566.5" y="1032" width="15.500" height="7.500" fill="#c45a4e"/><rect x="566.5" y="1032" width="15.500" height="1.500" fill="#f0c8a8"/><rect x="584.5" y="1032" width="15.500" height="7.500" fill="#c45a4e"/><rect x="584.5" y="1032" width="15.500" height="1.500" fill="#f0c8a8"/><rect x="602.5" y="1032" width="15.500" height="7.500" fill="#c45a4e"/><rect x="602.5" y="1032" width="15.500" height="1.500" fill="#f0c8a8"/><rect x="470" y="1040" width="9" height="4.600" rx="2.200" fill="#a8303e"/><rect x="481" y="1040" width="11" height="4.600" rx="2.200" fill="#a8303e"/><rect x="504" y="1040" width="11" height="4.600" rx="2.200" fill="#a8303e"/><rect x="517" y="1040" width="10" height="4.600" rx="2.200" fill="#a8303e"/><rect x="529" y="1040" width="8" height="4.600" rx="2.200" fill="#a8303e"/><rect x="539" y="1040" width="10" height="4.600" rx="2.200" fill="#a8303e"/><rect x="444" y="1046" width="9" height="4.600" rx="2.200" fill="#a8303e"/><rect x="455" y="1046" width="10" height="4.600" rx="2.200" fill="#a8303e"/><rect x="467" y="1046" width="8" height="4.600" rx="2.200" fill="#a8303e"/><rect x="477" y="1046" width="10" height="4.600" rx="2.200" fill="#a8303e"/><rect x="489" y="1046" width="9" height="4.600" rx="2.200" fill="#a8303e"/><rect x="500" y="1046" width="10" height="4.600" rx="2.200" fill="#a8303e"/><rect x="524" y="1046" width="10" height="4.600" rx="2.200" fill="#a8303e"/><rect x="536" y="1046" width="9" height="4.600" rx="2.200" fill="#a8303e"/><rect x="446" y="1052" width="11" height="4.600" rx="2.200" fill="#a8303e"/><rect x="471" y="1052" width="10" height="4.600" rx="2.200" fill="#a8303e"/><rect x="483" y="1052" width="10" height="4.600" rx="2.200" fill="#a8303e"/><rect x="495" y="1052" width="9" height="4.600" rx="2.200" fill="#a8303e"/><rect x="506" y="1052" width="10" height="4.600" rx="2.200" fill="#a8303e"/><rect x="518" y="1052" width="9" height="4.600" rx="2.200" fill="#a8303e"/><rect x="529" y="1052" width="10" height="4.600" rx="2.200" fill="#a8303e"/><rect x="456" y="1058" width="11" height="4.600" rx="2.200" fill="#a8303e"/><rect x="469" y="1058" width="10" height="4.600" rx="2.200" fill="#a8303e"/><rect x="481" y="1058" width="11" height="4.600" rx="2.200" fill="#a8303e"/><rect x="494" y="1058" width="9" height="4.600" rx="2.200" fill="#a8303e"/><rect x="516" y="1058" width="9" height="4.600" rx="2.200" fill="#a8303e"/><rect x="527" y="1058" width="11" height="4.600" rx="2.200" fill="#a8303e"/><rect x="456" y="1063" width="10" height="4.600" rx="2.200" fill="#a8303e"/><rect x="468" y="1063" width="10" height="4.600" rx="2.200" fill="#a8303e"/><rect x="480" y="1063" width="9" height="4.600" rx="2.200" fill="#a8303e"/><rect x="491" y="1063" width="8" height="4.600" rx="2.200" fill="#a8303e"/><rect x="501" y="1063" width="9" height="4.600" rx="2.200" fill="#a8303e"/><rect x="512" y="1063" width="9" height="4.600" rx="2.200" fill="#a8303e"/><rect x="523" y="1063" width="9" height="4.600" rx="2.200" fill="#a8303e"/><rect x="459" y="1006" width="6.500" height="4.500" rx="2" fill="#9a3340"/><rect x="459" y="1012" width="6.500" height="4.500" rx="2" fill="#9a3340"/><rect x="459" y="1018" width="6.500" height="4.500" rx="2" fill="#9a3340"/><rect x="459" y="1024" width="6.500" height="4.500" rx="2" fill="#9a3340"/><rect x="459" y="1030" width="6.500" height="4.500" rx="2" fill="#9a3340"/><rect x="459" y="1036" width="6.500" height="4.500" rx="2" fill="#9a3340"/><rect x="694" y="886" width="6.500" height="110" fill="#c45a4e"/><rect x="694" y="902.5" width="6.500" height="1.500" fill="#7a3038"/><rect x="694" y="920.5" width="6.500" height="1.500" fill="#7a3038"/><rect x="694" y="938.5" width="6.500" height="1.500" fill="#7a3038"/><rect x="694" y="956.5" width="6.500" height="1.500" fill="#7a3038"/><rect x="694" y="974.5" width="6.500" height="1.500" fill="#7a3038"/><rect x="694" y="992.5" width="6.500" height="1.500" fill="#7a3038"/><rect x="694" y="1010.5" width="6.500" height="1.500" fill="#7a3038"/><rect x="704.0" y="884" width="9" height="8" fill="#6a58b0"/><rect x="705.5" y="896" width="13" height="8" fill="#6a58b0"/><rect x="704.0" y="908" width="13" height="8" fill="#6a58b0"/><rect x="705.5" y="920" width="9" height="8" fill="#6a58b0"/><rect x="704.0" y="932" width="13" height="8" fill="#6a58b0"/><rect x="705.5" y="944" width="13" height="8" fill="#6a58b0"/><rect x="704.0" y="956" width="9" height="8" fill="#6a58b0"/><rect x="705.5" y="968" width="13" height="8" fill="#6a58b0"/><rect x="704.0" y="980" width="13" height="8" fill="#6a58b0"/><rect x="705.5" y="992" width="9" height="8" fill="#6a58b0"/><rect x="658" y="994.500" width="15.500" height="7.500" fill="#c45a4e"/><rect x="658" y="994.500" width="15.500" height="1.500" fill="#f0c8a8"/><rect x="676" y="994.500" width="15.500" height="7.500" fill="#c45a4e"/><rect x="676" y="994.500" width="15.500" height="1.500" fill="#f0c8a8"/><rect x="694" y="994.500" width="15.500" height="7.500" fill="#c45a4e"/><rect x="694" y="994.500" width="15.500" height="1.500" fill="#f0c8a8"/><rect x="620" y="995" width="34" height="13" fill="#c45a4e"/><rect x="620" y="1010" width="6" height="22" fill="#c45a4e"/><rect x="630" y="1012" width="10" height="12" fill="#6a58b0"/><rect x="607" y="996.0" width="12" height="6" rx="2" fill="#6a68a8"/><rect x="600" y="1003.5" width="19" height="6" rx="2" fill="#6a68a8"/><rect x="593" y="1011.0" width="26" height="6" rx="2" fill="#6a68a8"/><rect x="586" y="1018.5" width="33" height="6" rx="2" fill="#6a68a8"/><rect x="579" y="1026.0" width="40" height="6" rx="2" fill="#6a68a8"/><path d="M556 928V1030M570 928V1030" stroke="#c07860" stroke-width="1.500"/><rect x="557" y="932" width="12" height="1.500" fill="#b06858"/><rect x="557" y="937" width="12" height="1.500" fill="#b06858"/><rect x="557" y="942" width="12" height="1.500" fill="#b06858"/><rect x="557" y="947" width="12" height="1.500" fill="#b06858"/><rect x="557" y="952" width="12" height="1.500" fill="#b06858"/><rect x="557" y="957" width="12" height="1.500" fill="#b06858"/><rect x="557" y="962" width="12" height="1.500" fill="#b06858"/><rect x="557" y="967" width="12" height="1.500" fill="#b06858"/><rect x="557" y="972" width="12" height="1.500" fill="#b06858"/><rect x="557" y="977" width="12" height="1.500" fill="#b06858"/><rect x="557" y="982" width="12" height="1.500" fill="#b06858"/><rect x="557" y="987" width="12" height="1.500" fill="#b06858"/><rect x="557" y="992" width="12" height="1.500" fill="#b06858"/><rect x="557" y="997" width="12" height="1.500" fill="#b06858"/><rect x="557" y="1002" width="12" height="1.500" fill="#b06858"/><rect x="557" y="1007" width="12" height="1.500" fill="#b06858"/><rect x="557" y="1012" width="12" height="1.500" fill="#b06858"/><rect x="557" y="1017" width="12" height="1.500" fill="#b06858"/><rect x="557" y="1022" width="12" height="1.500" fill="#b06858"/><rect x="557" y="1027" width="12" height="1.500" fill="#b06858"/><path d="M615 936V914L621.500 903L628 914V936Z" fill="#2a3060"/><path d="M618 934V915L621.500 908L625 915V934Z" fill="#48c0d8"/><rect x="613" y="936" width="17" height="2.500" fill="#5878b8"/><path d="M645 915L657.500 912.500L670 915C670 928 666 936 657.500 940C649 936 645 928 645 915Z" fill="#4a78c8" stroke="#e0a040" stroke-width="1.800"/><path d="M657.500 914V938" stroke="#a8d0f8" stroke-width="1.200"/><path d="M646 995V966C646 956 652 951 660 951S674 956 674 966V995Z" fill="#23203c"/><path d="M646 995V966C646 956 652 951 660 951S674 956 674 966V995" fill="none" stroke="#5058a0" stroke-width="2.500" stroke-dasharray="3 1.500"/><rect x="614" y="970" width="9" height="12" fill="#d8d0c8"/><rect x="615" y="982" width="7" height="12" fill="#4a3850"/><rect x="626" y="968" width="1" height="26" fill="#e8e8e8"/><path d="M674 968L682 966V986L674 984Z" fill="#d84840"/><defs><filter id="gb" x="-5%" y="-5%" width="110%" height="110%"><feGaussianBlur stdDeviation="2"/></filter></defs><rect x="206" y="794" width="547" height="268" fill="#000" opacity="0.080" filter="url(#gb)"/><rect x="214" y="801" width="534" height="256" fill="#000" opacity="0.110"/><rect x="545" y="801" width="203" height="256" fill="#000" opacity="0.060"/><rect x="227.5" y="812.5" width="51.200" height="51.200" fill="#444c80" opacity="0.970"/><rect x="227.5" y="872.5" width="51.200" height="51.200" fill="#444c80" opacity="0.970"/><rect x="227.5" y="932.5" width="51.200" height="51.200" fill="#444c80" opacity="0.970"/><rect x="227.5" y="992.5" width="51.200" height="51.200" fill="#444c80" opacity="0.970"/><rect x="287.5" y="812.5" width="51.200" height="51.200" fill="#444c80" opacity="0.970"/><rect x="287.5" y="872.5" width="51.200" height="51.200" fill="#444c80" opacity="0.970"/><rect x="287.5" y="932.5" width="51.200" height="51.200" fill="#444c80" opacity="0.970"/><rect x="287.5" y="992.5" width="51.200" height="51.200" fill="#444c80" opacity="0.970"/><rect x="347.2" y="812.5" width="51.200" height="51.200" fill="#444c80" opacity="0.970"/><rect x="347.2" y="872.5" width="51.200" height="51.200" fill="#444c80" opacity="0.970"/><rect x="347.2" y="932.5" width="51.200" height="51.200" fill="#444c80" opacity="0.970"/><rect x="347.2" y="992.5" width="51.200" height="51.200" fill="#444c80" opacity="0.970"/><rect x="406.8" y="812.5" width="51.200" height="51.200" fill="#444c80" opacity="0.970"/><rect x="406.8" y="872.5" width="51.200" height="51.200" fill="#444c80" opacity="0.970"/><rect x="406.8" y="932.5" width="51.200" height="51.200" fill="#444c80" opacity="0.970"/><rect x="406.8" y="992.5" width="51.200" height="51.200" fill="#444c80" opacity="0.970"/><rect x="466.5" y="812.5" width="51.200" height="51.200" fill="#444c80" opacity="0.970"/><rect x="466.5" y="872.5" width="51.200" height="51.200" fill="#444c80" opacity="0.970"/><rect x="466.5" y="932.5" width="51.200" height="51.200" fill="#444c80" opacity="0.970"/><rect x="466.5" y="992.5" width="51.200" height="51.200" fill="#444c80" opacity="0.970"/><rect x="612.700" y="808" width="67.300" height="68" rx="1" fill="#c8c8c8" opacity="0.640"/><rect x="553" y="885" width="187" height="161.600" rx="1.500" fill="#c8c8c8" opacity="0.640"/><text x="612.500" y="968.300" font-family="Liberation Sans, sans-serif" font-size="12.100" fill="#ffffff">New Text</text></svg>
<div class="r" style="left:961px;top:687px;width:119px;height:31px;background:#3c3c3c;border-radius:4px 4px 0 0;"></div>
<svg style="left:973.5px;top:696.5px;" width="15.5" height="13" viewBox="0 0 15 13"><path d="M0.500 1.500a1 1 0 0 1 1 -1H5.500L7.200 2.400H13.500a1 1 0 0 1 1 1V11.500a1 1 0 0 1 -1 1H1.500a1 1 0 0 1 -1 -1Z" fill="#c4c4c4"/></svg>
<div class="t" style="left:993.5px;top:692.10px;height:24px;line-height:24px;font-size:15.7px;color:#c4c4c4;letter-spacing:0.021px;">Project</div>
<svg style="left:1391.5px;top:695px;" width="12" height="14" viewBox="0 0 12 14"><rect x="0.75" y="6.75" width="9.5" height="6" fill="none" stroke="#c4c4c4" stroke-width="1.5"/><path d="M4.5 6.5V3.8a2.6 2.6 0 0 1 5.2 0V4.6" fill="none" stroke="#c4c4c4" stroke-width="1.5"/></svg>
<svg style="left:1415.3px;top:694px;" width="6" height="16" viewBox="0 0 6 16"><circle cx="3" cy="3.4000000000000004" r="1.4" fill="#c4c4c4"/><circle cx="3" cy="8.0" r="1.4" fill="#c4c4c4"/><circle cx="3" cy="12.6" r="1.4" fill="#c4c4c4"/></svg>
<div class="r" style="left:961px;top:717px;width:474px;height:25.5px;background:#3c3c3c;"></div>
<svg style="left:969px;top:722px;" width="16" height="16" viewBox="0 0 16 16"><path d="M8 0.500V15.500M0.500 8H15.500" stroke="#d0d0d0" stroke-width="1.700"/></svg>
<svg style="left:990px;top:727.5px;" width="9.6" height="5.2" viewBox="0 0 9.6 5.2"><path d="M0 0H9.6L4.8 5.2Z" fill="#c4c4c4"/></svg>
<div class="r" style="left:1017.4px;top:720px;width:231px;height:19px;background:#2a2a2a;border-radius:3px;border:1px solid #202020;"></div>
<svg style="left:1023.5px;top:725px;" width="10" height="10" viewBox="0 0 10 10"><circle cx="3.800" cy="3.800" r="2.600" fill="none" stroke="#c4c4c4" stroke-width="1.500"/><path d="M5.800 5.800L9 9" stroke="#c4c4c4" stroke-width="1.800"/></svg>
<div class="r" style="left:1229px;top:721px;width:19px;height:17px;background:#3a3a3a;border-radius:2px;"></div>
<svg style="left:1231.5px;top:723px;" width="14" height="13" viewBox="0 0 14 13"><g fill="none" stroke="#c4c4c4" stroke-width="1.200"><rect x="4.600" y="0.600" width="8.800" height="8.800" rx="1"/><path d="M7.400 6.600L11 3M8.200 2.800H11.200V5.800"/><rect x="0.600" y="7.600" width="4.800" height="4.800" fill="#3a3a3a"/></g></svg>
<div class="r" style="left:1253px;top:718px;width:1.2px;height:24px;background:#2a2a2a;"></div>
<div class="r" style="left:1286.5px;top:718px;width:1.2px;height:24px;background:#2a2a2a;"></div>
<div class="r" style="left:1318.3px;top:718px;width:1.2px;height:24px;background:#2a2a2a;"></div>
<div class="r" style="left:1351.4px;top:718px;width:1.2px;height:24px;background:#2a2a2a;"></div>
<div class="r" style="left:1383.5px;top:718px;width:1.2px;height:24px;background:#2a2a2a;"></div>
<svg style="left:1262px;top:721.5px;" width="16" height="17" viewBox="0 0 16 17"><rect x="2" y="0.500" width="6.500" height="6.500" fill="#c4c4c4"/><circle cx="4.500" cy="12.500" r="4" fill="#c4c4c4"/><path d="M12 4.500L15.500 11.500H8.500Z" fill="#c4c4c4"/></svg>
<svg style="left:1295px;top:723.5px;" width="15" height="13" viewBox="0 0 15 13"><path d="M0.500 7.500L7.500 1L13.500 0.500L14 6L7 12.500Z" fill="#c4c4c4"/><circle cx="11" cy="3.500" r="1.200" fill="#3c3c3c"/></svg>
<svg style="left:1326px;top:721.5px;" width="17" height="17" viewBox="0 0 17 17"><path d="M5.500 0.500H11.500L16.500 5.500V11.500L11.500 16.500H5.500L0.500 11.500V5.500Z" fill="#d8d8d8"/><text x="8.500" y="13.600" text-anchor="middle" font-size="14" font-weight="bold" fill="#3c3c3c" font-family="Liberation Sans, sans-serif">!</text></svg>
<svg style="left:1360px;top:723px;" width="15" height="14" viewBox="0 0 15 14"><path d="M7.500 0.500L9.600 5.200L14.700 5.700L10.900 9.100L12 14L7.500 11.400L3 14L4.100 9.100L0.300 5.700L5.400 5.200Z" fill="#9a9a9a"/></svg>
<svg style="left:1392px;top:725px;" width="18" height="11" viewBox="0 0 18 11"><path d="M0.800 5.500C4 0.800 14 0.800 17.200 5.500C14 10.200 4 10.200 0.800 5.500Z" fill="none" stroke="#6e6e6e" stroke-width="1.400"/><ellipse cx="9" cy="4.800" rx="3.400" ry="3" fill="#6e6e6e"/></svg>
<div class="t" style="left:1412.4px;top:720.20px;height:22px;line-height:22px;font-size:15.7px;color:#c4c4c4;letter-spacing:-1.309px;">31</div>
<div class="r" style="left:961px;top:742.5px;width:474px;height:370px;background:#383838;"></div>
<div class="r" style="left:961px;top:742px;width:474px;height:1px;background:#232323;"></div>
<div class="r" style="left:1220.5px;top:742.5px;width:1px;height:370px;background:#242424;"></div>
<div class="r" style="left:1221.5px;top:743px;width:213.5px;height:26.5px;background:#3e3e3e;"></div>
<div class="r" style="left:1221.5px;top:1092px;width:213.5px;height:20.5px;background:#3c3c3c;"></div>
<div class="r" style="left:1352px;top:1099.5px;width:62px;height:2px;background:#5a5a5a;border-radius:1px;"></div>
<div class="r" style="left:1346px;top:1094.5px;width:12px;height:12px;background:#c0c0c0;border-radius:50%;"></div>
<div class="r" style="left:961px;top:941.8px;width:259.5px;height:20px;background:#4d4d4d;"></div>
<svg style="left:965.7px;top:748.0999999999999px;" width="11.5" height="9.5" viewBox="0 0 11.5 9.5"><path d="M0 0H11.500L5.750 9.500Z" fill="#6e6e6e"/></svg>
<svg style="left:984px;top:745px;" width="15" height="14" viewBox="0 0 15 14"><path d="M7.500 0.500L9.600 5.200L14.700 5.700L10.900 9.100L12 14L7.500 11.400L3 14L4.100 9.100L0.300 5.700L5.400 5.200Z" fill="#d8d8d8"/></svg>
<div class="t" style="left:1005px;top:742.50px;height:20px;line-height:20px;font-size:15.2px;color:#e0e0e0;font-weight:bold;letter-spacing:0.108px;">Favorites</div>
<svg style="left:1000.0px;top:765.5px;" width="15" height="16" viewBox="0 0 15 16"><circle cx="6" cy="6" r="4.800" fill="none" stroke="#c4c4c4" stroke-width="1.500"/><path d="M9.400 9.600L13.800 14.400" stroke="#c4c4c4" stroke-width="2.200"/></svg>
<div class="t" style="left:1021.4px;top:762.60px;height:20px;line-height:20px;font-size:15.7px;color:#c4c4c4;letter-spacing:0.040px;">All Materials</div>
<svg style="left:1000.0px;top:785.5px;" width="15" height="16" viewBox="0 0 15 16"><circle cx="6" cy="6" r="4.800" fill="none" stroke="#c4c4c4" stroke-width="1.500"/><path d="M9.400 9.600L13.800 14.400" stroke="#c4c4c4" stroke-width="2.200"/></svg>
<div class="t" style="left:1021.4px;top:782.60px;height:20px;line-height:20px;font-size:15.7px;color:#c4c4c4;letter-spacing:0.008px;">All Models</div>
<svg style="left:1000.0px;top:805.5px;" width="15" height="16" viewBox="0 0 15 16"><circle cx="6" cy="6" r="4.800" fill="none" stroke="#c4c4c4" stroke-width="1.500"/><path d="M9.400 9.600L13.800 14.400" stroke="#c4c4c4" stroke-width="2.200"/></svg>
<div class="t" style="left:1021.4px;top:802.60px;height:20px;line-height:20px;font-size:15.7px;color:#c4c4c4;letter-spacing:-0.040px;">All Prefabs</div>
<svg style="left:965.7px;top:847.3px;" width="11.5" height="9.5" viewBox="0 0 11.5 9.5"><path d="M0 0H11.500L5.750 9.500Z" fill="#6e6e6e"/></svg>
<svg style="left:983.5px;top:845px;" width="18" height="13.5" viewBox="0 0 18 13.500"><path d="M0.500 2a1 1 0 0 1 1 -1H5.500L7 2.600H13a1 1 0 0 1 1 1V5H4.200L1.500 12H0.500Z" fill="#c4c4c4"/><path d="M4.800 6H17.500L14.600 13H1.900Z" fill="#e0e0e0"/></svg>
<div class="t" style="left:1005px;top:841.80px;height:20px;line-height:20px;font-size:15.2px;color:#e0e0e0;font-weight:bold;letter-spacing:0.172px;">Assets</div>
<svg style="left:984.5px;top:866.1px;" width="9" height="10.8" viewBox="0 0 9 10.8"><path d="M0 0V10.8L9 5.4Z" fill="#6e6e6e"/></svg>
<svg style="left:1000.5px;top:865.6px;" width="15" height="12.5" viewBox="0 0 15 13"><path d="M0.500 1.500a1 1 0 0 1 1 -1H5.500L7.200 2.400H13.500a1 1 0 0 1 1 1V11.500a1 1 0 0 1 -1 1H1.500a1 1 0 0 1 -1 -1Z" fill="#c4c4c4"/></svg>
<div class="r" style="left:1021.400px;top:861.5px;width:198.600px;height:20px;overflow:hidden;"><div class="t" style="left:0;top:0;height:20px;line-height:20.600px;font-size:15.7px;color:#c4c4c4;letter-spacing:-0.200px;">Medieval_pixel_art_asset_FREE</div></div>
<svg style="left:1000.5px;top:885.6px;" width="15" height="12.5" viewBox="0 0 15 13"><path d="M0.500 1.500a1 1 0 0 1 1 -1H5.500L7.200 2.400H13.500a1 1 0 0 1 1 1V11.500a1 1 0 0 1 -1 1H1.500a1 1 0 0 1 -1 -1Z" fill="#c4c4c4"/></svg>
<div class="t" style="left:1021.4px;top:881.80px;height:20px;line-height:20px;font-size:15.7px;color:#c4c4c4;letter-spacing:0.139px;">Objectes</div>
<svg style="left:1000.5px;top:905.6px;" width="15" height="12.5" viewBox="0 0 15 13"><path d="M0.500 1.500a1 1 0 0 1 1 -1H5.500L7.200 2.400H13.500a1 1 0 0 1 1 1V11.500a1 1 0 0 1 -1 1H1.500a1 1 0 0 1 -1 -1Z" fill="#c4c4c4"/></svg>
<div class="t" style="left:1021.4px;top:901.80px;height:20px;line-height:20px;font-size:15.7px;color:#c4c4c4;letter-spacing:0.060px;">Prefabs</div>
<svg style="left:1000.5px;top:925.6px;" width="15" height="12.5" viewBox="0 0 15 13"><path d="M0.500 1.500a1 1 0 0 1 1 -1H5.500L7.200 2.400H13.500a1 1 0 0 1 1 1V11.500a1 1 0 0 1 -1 1H1.500a1 1 0 0 1 -1 -1Z" fill="#c4c4c4"/></svg>
<div class="t" style="left:1021.4px;top:921.80px;height:20px;line-height:20px;font-size:15.7px;color:#c4c4c4;letter-spacing:-0.067px;">Scenes</div>
<svg style="left:1000.5px;top:945.6px;" width="15" height="12.5" viewBox="0 0 15 13"><path d="M0.500 1.500a1 1 0 0 1 1 -1H5.500L7.200 2.400H13.500a1 1 0 0 1 1 1V11.500a1 1 0 0 1 -1 1H1.500a1 1 0 0 1 -1 -1Z" fill="#c4c4c4"/></svg>
<div class="t" style="left:1021.4px;top:941.80px;height:20px;line-height:20px;font-size:15.7px;color:#c4c4c4;letter-spacing:0.233px;">Scripts</div>
<svg style="left:984.5px;top:966.1px;" width="9" height="10.8" viewBox="0 0 9 10.8"><path d="M0 0V10.8L9 5.4Z" fill="#6e6e6e"/></svg>
<svg style="left:1000.5px;top:965.6px;" width="15" height="12.5" viewBox="0 0 15 13"><path d="M0.500 1.500a1 1 0 0 1 1 -1H5.500L7.200 2.400H13.500a1 1 0 0 1 1 1V11.500a1 1 0 0 1 -1 1H1.500a1 1 0 0 1 -1 -1Z" fill="#c4c4c4"/></svg>
<div class="t" style="left:1021.4px;top:961.80px;height:20px;line-height:20px;font-size:15.7px;color:#c4c4c4;letter-spacing:0.236px;">Settings</div>
<svg style="left:984.5px;top:986.1px;" width="9" height="10.8" viewBox="0 0 9 10.8"><path d="M0 0V10.8L9 5.4Z" fill="#6e6e6e"/></svg>
<svg style="left:1000.5px;top:985.6px;" width="15" height="12.5" viewBox="0 0 15 13"><path d="M0.500 1.500a1 1 0 0 1 1 -1H5.500L7.200 2.400H13.500a1 1 0 0 1 1 1V11.500a1 1 0 0 1 -1 1H1.500a1 1 0 0 1 -1 -1Z" fill="#c4c4c4"/></svg>
<div class="t" style="left:1021.4px;top:981.80px;height:20px;line-height:20px;font-size:15.7px;color:#c4c4c4;letter-spacing:0.219px;">TextMesh Pro</div>
<svg style="left:984.5px;top:1006.1px;" width="9" height="10.8" viewBox="0 0 9 10.8"><path d="M0 0V10.8L9 5.4Z" fill="#6e6e6e"/></svg>
<svg style="left:1000.5px;top:1005.6px;" width="15" height="12.5" viewBox="0 0 15 13"><path d="M0.500 1.500a1 1 0 0 1 1 -1H5.500L7.200 2.400H13.500a1 1 0 0 1 1 1V11.500a1 1 0 0 1 -1 1H1.500a1 1 0 0 1 -1 -1Z" fill="#c4c4c4"/></svg>
<div class="t" style="left:1021.4px;top:1001.80px;height:20px;line-height:20px;font-size:15.7px;color:#c4c4c4;letter-spacing:0.138px;">Wizard - 2D Character</div>
<svg style="left:966.0px;top:1026.1px;" width="9" height="10.8" viewBox="0 0 9 10.8"><path d="M0 0V10.8L9 5.4Z" fill="#6e6e6e"/></svg>
<svg style="left:984px;top:1025px;" width="15" height="12.5" viewBox="0 0 15 13"><path d="M0.500 1.500a1 1 0 0 1 1 -1H5.500L7.200 2.400H13.500a1 1 0 0 1 1 1V11.500a1 1 0 0 1 -1 1H1.500a1 1 0 0 1 -1 -1Z" fill="#c4c4c4"/></svg>
<div class="t" style="left:1005px;top:1021.80px;height:20px;line-height:20px;font-size:15.2px;color:#e0e0e0;font-weight:bold;letter-spacing:0.180px;">Packages</div>
<div class="t" style="left:1226.8px;top:744.50px;height:22px;line-height:22px;font-size:15.7px;color:#c4c4c4;letter-spacing:-0.112px;">Assets</div>
<svg style="left:1282.5px;top:750.5px;" width="7" height="11" viewBox="0 0 7 11"><path d="M1 1L5.600 5.500L1 10" stroke="#a0a0a0" stroke-width="1.400" fill="none"/></svg>
<div class="t" style="left:1296px;top:744.50px;height:22px;line-height:22px;font-size:15.2px;color:#e0e0e0;font-weight:bold;letter-spacing:0.072px;">Scripts</div>
<svg style="left:1243.8px;top:771.9px;" width="15" height="17" viewBox="0 0 15 17"><path d="M0.500 1.500a1 1 0 0 1 1 -1H10.500L14.500 4.500V15.500a1 1 0 0 1 -1 1H1.500a1 1 0 0 1 -1 -1Z" fill="#f4f4f0"/><text x="7.400" y="13.200" text-anchor="middle" font-size="13" font-weight="bold" fill="#3a9a4a" font-family="Liberation Sans, sans-serif">#</text></svg>
<div class="t" style="left:1263.5px;top:770.70px;height:20px;line-height:20px;font-size:15.7px;color:#c4c4c4;letter-spacing:0.158px;">InventoryManager</div>
<svg style="left:1243.8px;top:791.9px;" width="15" height="17" viewBox="0 0 15 17"><path d="M0.500 1.500a1 1 0 0 1 1 -1H10.500L14.500 4.500V15.500a1 1 0 0 1 -1 1H1.500a1 1 0 0 1 -1 -1Z" fill="#f4f4f0"/><text x="7.400" y="13.200" text-anchor="middle" font-size="13" font-weight="bold" fill="#3a9a4a" font-family="Liberation Sans, sans-serif">#</text></svg>
<div class="t" style="left:1263.5px;top:790.70px;height:20px;line-height:20px;font-size:15.7px;color:#c4c4c4;letter-spacing:-0.010px;">Item</div>
<svg style="left:1243.8px;top:811.9px;" width="15" height="17" viewBox="0 0 15 17"><path d="M0.500 1.500a1 1 0 0 1 1 -1H10.500L14.500 4.500V15.500a1 1 0 0 1 -1 1H1.500a1 1 0 0 1 -1 -1Z" fill="#f4f4f0"/><text x="7.400" y="13.200" text-anchor="middle" font-size="13" font-weight="bold" fill="#3a9a4a" font-family="Liberation Sans, sans-serif">#</text></svg>
<div class="t" style="left:1263.5px;top:810.70px;height:20px;line-height:20px;font-size:15.7px;color:#c4c4c4;letter-spacing:0.055px;">ItemSlot</div>
<div class="r" style="left:0px;top:1113px;width:1919px;height:23px;background:#161616;"></div>
<div class="r" style="left:1821px;top:1115px;width:1px;height:21px;background:#2a2a2a;"></div>
<div class="r" style="left:1854px;top:1115px;width:1px;height:21px;background:#2a2a2a;"></div>
<div class="r" style="left:1886.6px;top:1115px;width:1px;height:21px;background:#2a2a2a;"></div>
<svg style="left:1827px;top:1117px;" width="20" height="19" viewBox="0 0 20 19"><g fill="#c4c4c4"><ellipse cx="10" cy="11.500" rx="4.600" ry="5.600"/><path d="M6.600 6.400a3.400 3 0 0 1 6.800 0Z"/></g><g stroke="#c4c4c4" stroke-width="1.200" fill="none"><path d="M7.400 4.400L6 2.400M12.600 4.400L14 2.400M5.600 9L2.800 7.600M14.400 9L17.200 7.600M5.400 12H2.200M14.600 12H17.800M5.800 15L3.200 17.200M14.200 15L16.800 17.200"/></g><path d="M2 1.500L18 18" stroke="#161616" stroke-width="3"/><path d="M2.600 1L18.600 17.500" stroke="#c4c4c4" stroke-width="1.300"/></svg>
<svg style="left:1860.5px;top:1117px;" width="20" height="19" viewBox="0 0 20 19"><g fill="#c4c4c4"><ellipse cx="10" cy="4.600" rx="6.800" ry="2.800"/><path d="M3.200 6.600c1 2.600 12.600 2.600 13.600 0v3c-1 2.600 -12.600 2.600 -13.600 0ZM3.200 11.400c1 2.600 12.600 2.600 13.600 0v3c-1 2.600 -12.600 2.600 -13.600 0Z"/></g><path d="M2 1.500L18 18" stroke="#161616" stroke-width="3"/><path d="M2.600 1L18.600 17.500" stroke="#c4c4c4" stroke-width="1.300"/></svg>
<svg style="left:1892.5px;top:1117.5px;" width="19" height="19" viewBox="0 0 19 19"><circle cx="9.500" cy="9.500" r="8" fill="none" stroke="#c4c4c4" stroke-width="1.500"/><path d="M5.800 9.600L8.600 12.400L13.400 6.800" fill="none" stroke="#c4c4c4" stroke-width="1.800"/></svg>
<svg style="left:0;top:0;pointer-events:none" width="1919" height="1136"><path d="M1270.7 201.3L1123.5 345.2" stroke="#f4f4f4" stroke-width="1.300" fill="none"/><path d="M1116.0 352.5L1121.6 343.2L1125.4 347.1Z" fill="#f4f4f4"/><path d="M1450.6 207.2L1519.1 169.4" stroke="#f4f4f4" stroke-width="1.300" fill="none"/><path d="M1528.3 164.3L1520.4 171.7L1517.8 167.0Z" fill="#f4f4f4"/><path d="M1320.0 551.0L1536.5 406.2" stroke="#f4f4f4" stroke-width="1.300" fill="none"/><path d="M1545.2 400.4L1538.0 408.5L1535.0 404.0Z" fill="#f4f4f4"/><path d="M1442.0 598.3L1558.3 491.9" stroke="#f4f4f4" stroke-width="1.300" fill="none"/><path d="M1566.0 484.8L1560.1 493.9L1556.4 489.9Z" fill="#f4f4f4"/></svg>
</body></html>
